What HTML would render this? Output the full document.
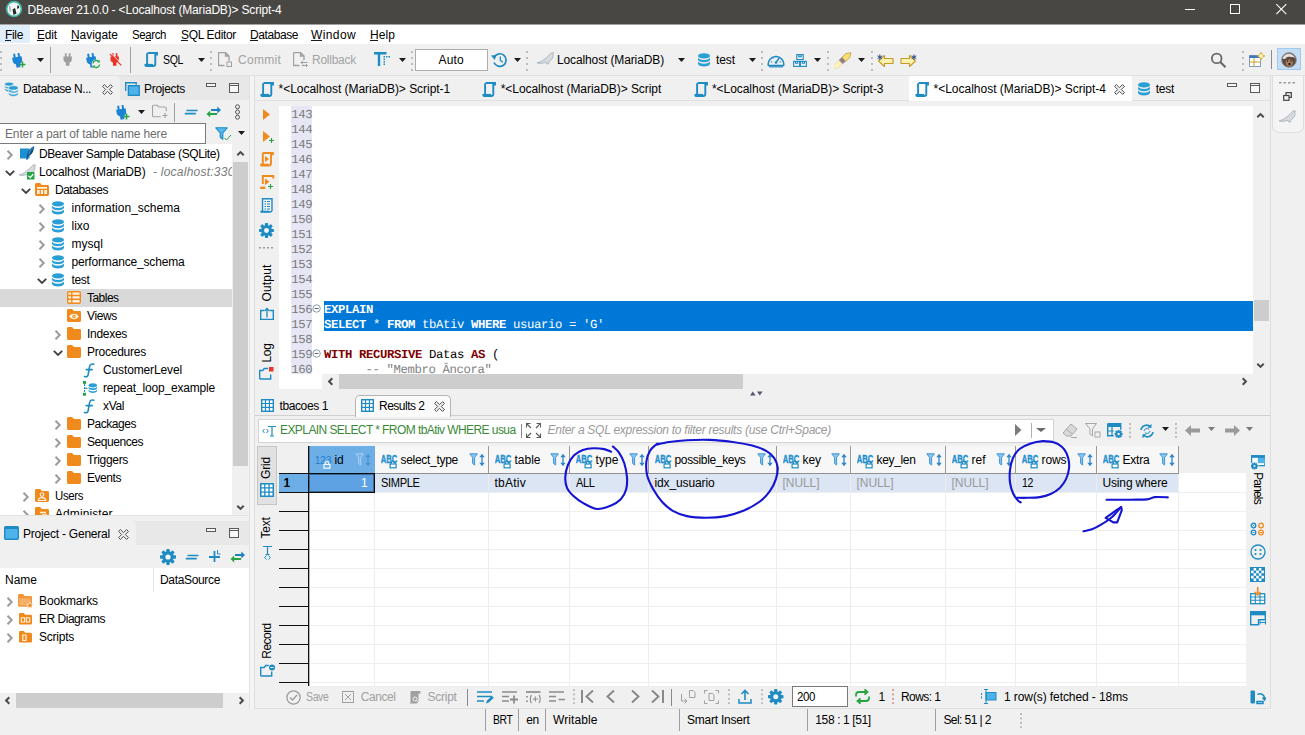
<!DOCTYPE html>
<html lang="en"><head><meta charset="utf-8"><title>DBeaver 21.0.0 - &lt;Localhost (MariaDB)&gt; Script-4</title>
<style>
*{box-sizing:border-box;margin:0;padding:0}
html,body{width:1305px;height:735px;overflow:hidden;background:#f0f0f0}
body{position:relative;font-family:"Liberation Sans",sans-serif;font-size:12px;color:#000}
div,span.t,svg{position:absolute}
span.t{white-space:pre;display:block}
span.m{font-family:"Liberation Mono",monospace;text-rendering:geometricPrecision}
span.b{font-weight:bold}
u{text-decoration:underline;text-underline-offset:1px}
</style></head>
<body>
<div style="left:0px;top:0px;width:1305px;height:24px;background:#494744;"></div>
<div style="left:0px;top:24px;width:1305px;height:1px;background:#a3a2a0;"></div>
<svg style="left:5px;top:0px" width="18" height="18" viewBox="0 0 18 18"><circle cx="9" cy="9" r="7.400" fill="#f4f6f6" stroke="#3fb5a3" stroke-width="1.700"/><path d="M4.500 5.500c1 1 1 5 .5 8M12.500 5c1.500.5 2 1.500 1.500 3l-2 1z" fill="#2a2a2a"/><path d="M7.500 9.500l2.500-1.500 1.500 5.500-3 1.500z" fill="#1f2a2a"/></svg>
<span class="t" style="left:27.5px;top:1.2px;line-height:18px;font-size:12px;color:#fff;letter-spacing:-0.173px;">DBeaver 21.0.0 - &lt;Localhost (MariaDB)&gt; Script-4</span>
<svg style="left:1160px;top:0" width="145" height="24" viewBox="0 0 145 24"><g stroke="#fff" stroke-width="1" fill="none" shape-rendering="crispEdges"><path d="M25 9.500h10"/><rect x="70.500" y="4.500" width="9" height="9"/></g><path d="M116.300 4.200l10 10M126.300 4.200l-10 10" stroke="#fff" stroke-width="1.100" fill="none"/></svg>
<div style="left:0px;top:25px;width:1305px;height:19px;background:#ffffff;"></div>
<div style="left:0px;top:25px;width:30px;height:18px;background:#e0eefb;"></div>
<span class="t" style="left:5px;top:25.5px;line-height:18px;font-size:12px;color:#000;letter-spacing:-0.336px;">File</span>
<span class="t" style="left:37px;top:25.5px;line-height:18px;font-size:12px;color:#000;letter-spacing:-0.172px;">Edit</span>
<span class="t" style="left:71px;top:25.5px;line-height:18px;font-size:12px;color:#000;letter-spacing:-0.047px;">Navigate</span>
<span class="t" style="left:132px;top:25.5px;line-height:18px;font-size:12px;color:#000;letter-spacing:-0.4px;transform:scaleX(0.9542);transform-origin:0 50%;">Search</span>
<span class="t" style="left:181px;top:25.5px;line-height:18px;font-size:12px;color:#000;letter-spacing:-0.325px;">SQL Editor</span>
<span class="t" style="left:250px;top:25.5px;line-height:18px;font-size:12px;color:#000;letter-spacing:-0.422px;">Database</span>
<span class="t" style="left:311px;top:25.5px;line-height:18px;font-size:12px;color:#000;letter-spacing:0.385px;">Window</span>
<span class="t" style="left:370px;top:25.5px;line-height:18px;font-size:12px;color:#000;letter-spacing:0.078px;">Help</span>
<div style="left:5px;top:40px;width:6px;height:1px;background:#1a1a1a;"></div>
<div style="left:37px;top:40px;width:7px;height:1px;background:#1a1a1a;"></div>
<div style="left:71px;top:40px;width:8px;height:1px;background:#1a1a1a;"></div>
<div style="left:145px;top:40px;width:6px;height:1px;background:#1a1a1a;"></div>
<div style="left:181px;top:40px;width:7px;height:1px;background:#1a1a1a;"></div>
<div style="left:250px;top:40px;width:8px;height:1px;background:#1a1a1a;"></div>
<div style="left:311px;top:40px;width:11px;height:1px;background:#1a1a1a;"></div>
<div style="left:370px;top:40px;width:8px;height:1px;background:#1a1a1a;"></div>
<div style="left:0px;top:44px;width:1305px;height:31px;background:#f0f0f0;"></div>
<div style="left:0px;top:75px;width:1305px;height:1px;background:#e2e2e2;"></div>
<svg style="left:0px;top:50.5px" width="2" height="20" viewBox="0 0 2 20"><rect x="0" y="0" width="2" height="2" fill="#bdbdbd"/><rect x="0" y="6" width="2" height="2" fill="#bdbdbd"/><rect x="0" y="12" width="2" height="2" fill="#bdbdbd"/><rect x="0" y="18" width="2" height="2" fill="#bdbdbd"/></svg>
<svg style="left:11px;top:52.5px" width="16" height="16" viewBox="0 0 16 16"><g transform="rotate(-9 6.500 8)"><path d="M3.300 .3h2v3.700h2.400V.3h2v3.700h1.600v3.200c0 2-1.200 3.300-2.800 3.800v3.500H4.500V11c-1.600-.5-2.800-1.800-2.800-3.800V4h1.600z" fill="#1b84d3"/></g><path d="M11.500 8.500v6M8.500 11.500h6" stroke="#27a344" stroke-width="1.500" fill="none"/></svg>
<svg style="left:37px;top:58px" width="7" height="4" viewBox="0 0 7 4"><path d="M0 0h7l-3.5 4z" fill="#1a1a1a"/></svg>
<div style="left:50px;top:47px;width:1px;height:26px;background:#a0a0a0;"></div>
<svg style="left:62px;top:53px" width="14" height="14" viewBox="0 0 16 16"><g transform="rotate(0 6.500 8)"><path d="M3.300 .3h2v3.700h2.400V.3h2v3.700h1.600v3.200c0 2-1.200 3.300-2.800 3.800v3.500H4.500V11c-1.600-.5-2.800-1.800-2.800-3.800V4h1.600z" fill="#9e9e9e"/></g></svg>
<svg style="left:85px;top:52.5px" width="16" height="16" viewBox="0 0 16 16"><g transform="rotate(-9 6.500 8)"><path d="M3.300 .3h2v3.700h2.400V.3h2v3.700h1.600v3.200c0 2-1.200 3.300-2.800 3.800v3.500H4.500V11c-1.600-.5-2.800-1.800-2.800-3.800V4h1.600z" fill="#1b84d3"/></g><circle cx="11.300" cy="11" r="4.600" fill="#f0f0f0"/><path d="M8 10.500a3.300 3.300 0 0 1 5.800-1.800M14.600 11.500a3.300 3.300 0 0 1-5.800 1.800" fill="none" stroke="#27a344" stroke-width="1.300"/><path d="M14.800 6.800v2.600h-2.600zM7.800 15.200v-2.600h2.600z" fill="#27a344"/></svg>
<svg style="left:109px;top:53px" width="14" height="14" viewBox="0 0 16 16"><g transform="rotate(0 6.500 8)"><path d="M3.300 .3h2v3.700h2.400V.3h2v3.700h1.600v3.200c0 2-1.200 3.300-2.800 3.800v3.500H4.500V11c-1.600-.5-2.800-1.800-2.800-3.800V4h1.600z" fill="#e8352a"/></g><path d="M1 1l13 13" stroke="#e8352a" stroke-width="1.300"/><path d="M2 0l13 13" stroke="#f0f0f0" stroke-width="1"/></svg>
<div style="left:130px;top:47px;width:1px;height:26px;background:#a0a0a0;"></div>
<svg style="left:144px;top:52px" width="14" height="15" viewBox="0 0 14 15"><path d="M3.500 1h9.500v2.500M11.300 1v11c0 1.200-.8 2-2 2H1.200c1.100 0 1.900-.8 1.900-2V1.200" fill="none" stroke="#1e8bc3" stroke-width="1.900"/><path d="M.5 13h8.500" stroke="#1e8bc3" stroke-width="2.200" fill="none"/></svg>
<span class="t" style="left:163px;top:50.5px;line-height:18px;font-size:12px;color:#000;letter-spacing:-0.4px;transform:scaleX(0.8766);transform-origin:0 50%;">SQL</span>
<svg style="left:198px;top:58px" width="7" height="4" viewBox="0 0 7 4"><path d="M0 0h7l-3.5 4z" fill="#1a1a1a"/></svg>
<svg style="left:210px;top:50.5px" width="2" height="20" viewBox="0 0 2 20"><rect x="0" y="0" width="2" height="2" fill="#bdbdbd"/><rect x="0" y="6" width="2" height="2" fill="#bdbdbd"/><rect x="0" y="12" width="2" height="2" fill="#bdbdbd"/><rect x="0" y="18" width="2" height="2" fill="#bdbdbd"/></svg>
<svg style="left:218px;top:52px" width="16" height="16" viewBox="0 0 16 16"><path d="M.5 .5h7l3.500 3.500v4M.5 .5v13h6M7.500 .5v3.500h3.500" fill="none" stroke="#a0a0a0" stroke-width="1.300"/><rect x="9" y="10" width="4.500" height="4.500" fill="none" stroke="#a0a0a0" stroke-width="1"/><path d="M11 7.500v2" stroke="#a0a0a0" stroke-width="1"/></svg>
<span class="t" style="left:238px;top:50.5px;line-height:18px;font-size:12px;color:#a3a3a3;letter-spacing:0.276px;">Commit</span>
<svg style="left:293px;top:52px" width="16" height="16" viewBox="0 0 16 16"><path d="M.5 .5h7l3.500 3.500v4M.5 .5v13h6M7.500 .5v3.500h3.500" fill="none" stroke="#a0a0a0" stroke-width="1.300"/><path d="M8 10.500h6.500M8 10.500l2-2M8 10.500l2 2M14.500 13.500H9M14.500 13.500l-1.500-1.500M14.500 13.500l-1.500 1.500" fill="none" stroke="#a0a0a0" stroke-width="1"/></svg>
<span class="t" style="left:312px;top:50.5px;line-height:18px;font-size:12px;color:#a3a3a3;letter-spacing:-0.254px;">Rollback</span>
<svg style="left:374px;top:52px" width="16" height="15" viewBox="0 0 16 15"><path d="M0 1.200h12.500M5 1.200V14" stroke="#1e8bc3" stroke-width="2.400" fill="none"/><rect x="9.5" y="4" width="1.500" height="1.500" fill="#1e8bc3"/><rect x="12.0" y="4" width="1.500" height="1.500" fill="#1e8bc3"/><rect x="14.5" y="4" width="1.500" height="1.500" fill="#1e8bc3"/><rect x="9.500" y="6.5" width="1.500" height="1.500" fill="#1e8bc3"/><rect x="9.500" y="9.0" width="1.500" height="1.500" fill="#1e8bc3"/><rect x="9.500" y="11.5" width="1.500" height="1.500" fill="#1e8bc3"/></svg>
<svg style="left:399px;top:58px" width="7" height="4" viewBox="0 0 7 4"><path d="M0 0h7l-3.5 4z" fill="#1a1a1a"/></svg>
<svg style="left:411px;top:50.5px" width="2" height="20" viewBox="0 0 2 20"><rect x="0" y="0" width="2" height="2" fill="#bdbdbd"/><rect x="0" y="6" width="2" height="2" fill="#bdbdbd"/><rect x="0" y="12" width="2" height="2" fill="#bdbdbd"/><rect x="0" y="18" width="2" height="2" fill="#bdbdbd"/></svg>
<div style="left:415px;top:49px;width:73px;height:22px;background:#fff;border:1px solid #adadad;"></div>
<span class="t" style="left:438.5px;top:50.5px;line-height:18px;font-size:12px;color:#000;letter-spacing:0.203px;">Auto</span>
<svg style="left:491px;top:52px" width="17" height="16" viewBox="0 0 17 16"><path d="M3.300 5a6.300 6.300 0 1 1-.3 5.500" fill="none" stroke="#1e8bc3" stroke-width="1.700"/><path d="M0 3.500l5.500-.5-1.800 5z" fill="#1e8bc3"/><path d="M9.300 4.500V8.300l2.500 2" fill="none" stroke="#1e8bc3" stroke-width="1.300"/></svg>
<svg style="left:514px;top:58px" width="7" height="4" viewBox="0 0 7 4"><path d="M0 0h7l-3.5 4z" fill="#1a1a1a"/></svg>
<svg style="left:526px;top:50.5px" width="2" height="20" viewBox="0 0 2 20"><rect x="0" y="0" width="2" height="2" fill="#bdbdbd"/><rect x="0" y="6" width="2" height="2" fill="#bdbdbd"/><rect x="0" y="12" width="2" height="2" fill="#bdbdbd"/><rect x="0" y="18" width="2" height="2" fill="#bdbdbd"/></svg>
<svg style="left:537px;top:52px" width="17" height="16" viewBox="0 0 17 16"><path d="M.5 10.500C3 10.500 5 9 7 7.500 9 6 11 4.500 12.500 2.500 13.300 1.300 14.800 .6 16.300 .8 15.800 1.600 15.900 2.600 16 3.600 16.100 5.400 15 7.600 13.200 9 12.400 9.700 11.600 10.600 11.400 12L9.600 12C9.900 10.900 9.600 10.300 8.800 10.400 6.500 10.800 3.500 11.800 .5 11.300Z" fill="#d5dade" stroke="#a3adb6" stroke-width=".8" stroke-linejoin="round"/></svg>
<span class="t" style="left:557px;top:50.5px;line-height:18px;font-size:12px;color:#000;letter-spacing:-0.125px;">Localhost (MariaDB)</span>
<svg style="left:678px;top:58px" width="7" height="4" viewBox="0 0 7 4"><path d="M0 0h7l-3.5 4z" fill="#1a1a1a"/></svg>
<svg style="left:697px;top:53px" width="14" height="14" viewBox="0 0 14 14"><g fill="#2a9fd6"><ellipse cx="7" cy="2.900" rx="6" ry="2.700"/><path d="M1 4.800c1.200 1.700 3.400 2.200 6 2.200s4.800-.5 6-2.200v2.300c-1 1.600-3.400 2.200-6 2.200s-5-.6-6-2.200z"/><path d="M1 8.600c1.200 1.700 3.400 2.200 6 2.200s4.800-.5 6-2.200v2.300c-1 1.800-3.400 2.500-6 2.500s-5-.7-6-2.500z"/></g></svg>
<span class="t" style="left:716px;top:50.5px;line-height:18px;font-size:12px;color:#000;letter-spacing:-0.086px;">test</span>
<svg style="left:749px;top:58px" width="7" height="4" viewBox="0 0 7 4"><path d="M0 0h7l-3.5 4z" fill="#1a1a1a"/></svg>
<svg style="left:761px;top:50.5px" width="2" height="20" viewBox="0 0 2 20"><rect x="0" y="0" width="2" height="2" fill="#bdbdbd"/><rect x="0" y="6" width="2" height="2" fill="#bdbdbd"/><rect x="0" y="12" width="2" height="2" fill="#bdbdbd"/><rect x="0" y="18" width="2" height="2" fill="#bdbdbd"/></svg>
<svg style="left:767px;top:52.5px" width="18" height="15" viewBox="0 0 18 15"><path d="M1.300 12.500A7.800 7.800 0 1 1 16.700 12.500z" fill="none" stroke="#1e8bc3" stroke-width="1.500" stroke-linejoin="round"/><path d="M2 13.800h14" stroke="#1e8bc3" stroke-width="1.200"/><path d="M9 9.500l3.200-4.500" stroke="#1e8bc3" stroke-width="1.500"/><circle cx="9" cy="9.500" r="1.300" fill="#1e8bc3"/><path d="M3.800 8.800h1.500M12.700 8.800h1.500M5.300 4.800l1 1M9 2.800v1.500" stroke="#1e8bc3" stroke-width="1"/></svg>
<svg style="left:792.7px;top:53.6px" width="14" height="13" viewBox="0 0 14 13"><g fill="none" stroke="#1e8bc3" stroke-width="1.100"><rect x="3.800" y=".6" width="6.400" height="5"/><rect x=".6" y="7.400" width="6" height="5"/><rect x="7.400" y="7.400" width="6" height="5"/><path d="M5.800 .6v2.200h2.400V.6M2.500 7.400v1.800h2.200v-1.800M9.300 7.400v1.800h2.200v-1.800"/></g></svg>
<svg style="left:814px;top:58px" width="7" height="4" viewBox="0 0 7 4"><path d="M0 0h7l-3.5 4z" fill="#1a1a1a"/></svg>
<svg style="left:827px;top:50.5px" width="2" height="20" viewBox="0 0 2 20"><rect x="0" y="0" width="2" height="2" fill="#bdbdbd"/><rect x="0" y="6" width="2" height="2" fill="#bdbdbd"/><rect x="0" y="12" width="2" height="2" fill="#bdbdbd"/><rect x="0" y="18" width="2" height="2" fill="#bdbdbd"/></svg>
<svg style="left:833.5px;top:51px" width="18" height="18" viewBox="0 0 18 18"><g transform="rotate(-42 9 9)"><path d="M-2 6.500h8v5h-8c-1.500-.8-1.500-4.200 0-5z" fill="#fbf1bd" stroke="#ead58a" stroke-width=".6"/><rect x="6" y="6.200" width="4.200" height="5.600" fill="#8f7f88"/><path d="M10.200 6.200h5.300l4.300 2.800-4.300 2.800h-5.300z" fill="#f7dd7a" stroke="#c9a43a" stroke-width=".8" stroke-linejoin="round"/></g></svg>
<svg style="left:858px;top:58px" width="7" height="4" viewBox="0 0 7 4"><path d="M0 0h7l-3.5 4z" fill="#1a1a1a"/></svg>
<svg style="left:871px;top:50.5px" width="2" height="20" viewBox="0 0 2 20"><rect x="0" y="0" width="2" height="2" fill="#bdbdbd"/><rect x="0" y="6" width="2" height="2" fill="#bdbdbd"/><rect x="0" y="12" width="2" height="2" fill="#bdbdbd"/><rect x="0" y="18" width="2" height="2" fill="#bdbdbd"/></svg>
<svg style="left:876.5px;top:52.5px" width="17" height="16" viewBox="0 0 17 16"><g transform="translate(.5 0)"><path d="M7 2.500L1 8l6 5.500v-3h8.500v-5H7z" fill="#fdf1b0" stroke="#c49a2a" stroke-width="1.100" stroke-linejoin="round"/></g><path d="M2.800 1.500v5.400M.5 2.800l4.600 2.800M.5 5.600l4.600-2.800" stroke="#2a4a8a" stroke-width="1"/></svg>
<svg style="left:899.8px;top:52.5px" width="17" height="16" viewBox="0 0 17 16"><g transform="translate(16.500 0) scale(-1 1)"><path d="M7 2.500L1 8l6 5.500v-3h8.500v-5H7z" fill="#fdf1b0" stroke="#c49a2a" stroke-width="1.100" stroke-linejoin="round"/></g><g transform="translate(11.200 0)"><path d="M2.800 1.500v5.400M.5 2.800l4.600 2.800M.5 5.600l4.600-2.800" stroke="#2a4a8a" stroke-width="1"/></g></svg>
<svg style="left:1210px;top:51px" width="18" height="18" viewBox="0 0 18 18"><circle cx="6.700" cy="7.400" r="4.800" fill="none" stroke="#6a6a6a" stroke-width="1.800"/><path d="M10.300 11l5.200 5.200" stroke="#6a6a6a" stroke-width="2.200"/></svg>
<svg style="left:1242px;top:50.5px" width="2" height="20" viewBox="0 0 2 20"><rect x="0" y="0" width="2" height="2" fill="#bdbdbd"/><rect x="0" y="6" width="2" height="2" fill="#bdbdbd"/><rect x="0" y="12" width="2" height="2" fill="#bdbdbd"/><rect x="0" y="18" width="2" height="2" fill="#bdbdbd"/></svg>
<svg style="left:1249px;top:52px" width="16" height="16" viewBox="0 0 16 16"><rect x=".5" y="3.500" width="11" height="11" fill="#fff" stroke="#7f9fc6" stroke-width="1"/><path d="M.5 3.500h11v2.500H.5z" fill="#3b77bc"/><path d="M.5 10h11M5 6v8.500" stroke="#c9a227" stroke-width="1"/><path d="M12 .3l1.300 2.500 2.500 1.200-2.500 1.300L12 7.800l-1.300-2.500L8.200 4l2.500-1.200z" fill="#fff6c0" stroke="#d4a017" stroke-width=".8"/></svg>
<div style="left:1271px;top:50px;width:1px;height:19px;background:#8a8a8a;"></div>
<div style="left:1277px;top:48px;width:24px;height:22px;background:#c5def5;border:1px solid #9ccaf0;"></div>
<svg style="left:1281px;top:52px" width="16" height="16" viewBox="0 0 16 16"><circle cx="8" cy="8" r="7.300" fill="#5c4a40" stroke="#8a8f94" stroke-width="1"/><path d="M1.500 6.500c1-3.500 4-5 7-4.800 2.500.2 5 2 5.800 5-1-1.200-2.300-1.800-3.800-1.500-2.500-.8-5-.5-6 1.500-1 .3-2 .3-3-.2z" fill="#e8e3dc"/><path d="M5 8.500c1.500-1.500 5-1.500 6.500.3 1 1.700.3 4.200-1.300 5.500-1.700.8-3.700.3-4.700-1C4.300 11.500 4.300 9.500 5 8.500z" fill="#a67c5b"/><circle cx="6.500" cy="9" r=".7" fill="#1a1a1a"/><circle cx="10" cy="9" r=".7" fill="#1a1a1a"/><path d="M7.500 11h2v2.200h-2z" fill="#2a1a10"/></svg>
<div style="left:0px;top:76px;width:249px;height:25px;background:#e8e8e8;"></div>
<div style="left:0px;top:76px;width:120px;height:25px;background:#f0f0f0;border-top-right-radius:5px;"></div>
<div style="left:0px;top:100px;width:249px;height:417px;background:#f0f0f0;"></div>
<svg style="left:3.5px;top:81.5px" width="15" height="15" viewBox="0 0 15 15"><g transform="translate(0 0) scale(0.72)" fill="#2a9fd6" stroke="#f0f0f0" stroke-width=".7"><ellipse cx="7" cy="2.900" rx="6" ry="2.700"/><path d="M1 4.800c1.200 1.700 3.400 2.200 6 2.200s4.800-.5 6-2.200v2.300c-1 1.600-3.400 2.200-6 2.200s-5-.6-6-2.200z"/><path d="M1 8.600c1.200 1.700 3.400 2.200 6 2.200s4.800-.5 6-2.200v2.300c-1 1.800-3.400 2.500-6 2.500s-5-.7-6-2.500z"/></g><g transform="translate(3.8 3.6) scale(0.8)" fill="#2a9fd6" stroke="#f0f0f0" stroke-width=".7"><ellipse cx="7" cy="2.900" rx="6" ry="2.700"/><path d="M1 4.800c1.200 1.700 3.400 2.200 6 2.200s4.800-.5 6-2.200v2.300c-1 1.600-3.400 2.200-6 2.200s-5-.6-6-2.200z"/><path d="M1 8.600c1.200 1.700 3.400 2.200 6 2.200s4.800-.5 6-2.200v2.300c-1 1.800-3.400 2.500-6 2.500s-5-.7-6-2.500z"/></g></svg>
<span class="t" style="left:23px;top:79.5px;line-height:18px;font-size:12px;color:#000;letter-spacing:-0.413px;">Database N...</span>
<svg style="left:102px;top:84px" width="11" height="11" viewBox="0 0 11 11"><path d="M.6 2.400L2.400 .6 5.500 3.700 8.600 .6 10.400 2.400 7.300 5.500 10.400 8.600 8.600 10.400 5.500 7.300 2.400 10.400 .6 8.600 3.700 5.500z" fill="#f4f4f4" stroke="#4a4a4a" stroke-width="1"/></svg>
<svg style="left:125px;top:82px" width="15" height="14" viewBox="0 0 15 14"><path d="M.7 9V.7h10.500v2" fill="none" stroke="#1e8bc3" stroke-width="1.400"/><rect x="3.400" y="3.700" width="10.800" height="9.600" fill="#4db3ea" stroke="#1e8bc3" stroke-width="1.400"/></svg>
<span class="t" style="left:144px;top:79.5px;line-height:18px;font-size:12px;color:#000;letter-spacing:-0.295px;">Projects</span>
<svg style="left:206px;top:83px" width="34" height="11" viewBox="0 0 34 11"><g fill="#f8f8f8" stroke="#5a5a5a" stroke-width="1" shape-rendering="crispEdges"><rect x=".5" y=".5" width="9" height="3"/><rect x="23.500" y=".5" width="9" height="9"/><path d="M23.500 2.500h9"/></g></svg>
<svg style="left:115px;top:104.5px" width="16" height="16" viewBox="0 0 16 16"><g transform="rotate(-9 6.500 8)"><path d="M3.300 .3h2v3.700h2.400V.3h2v3.700h1.600v3.200c0 2-1.200 3.300-2.800 3.800v3.500H4.500V11c-1.600-.5-2.800-1.800-2.800-3.800V4h1.600z" fill="#1b84d3"/></g><path d="M11.500 8.500v6M8.500 11.500h6" stroke="#27a344" stroke-width="1.500" fill="none"/></svg>
<svg style="left:138px;top:110px" width="7" height="4" viewBox="0 0 7 4"><path d="M0 0h7l-3.5 4z" fill="#1a1a1a"/></svg>
<svg style="left:152px;top:104px" width="17" height="15" viewBox="0 0 17 15"><path d="M.5 2.500c0-.8.400-1.200 1.200-1.200h3.800l1.500 1.700h6c.8 0 1.200.4 1.200 1.200v3M.5 2.500v9c0 .8.400 1.200 1.200 1.200h7" fill="none" stroke="#a3a3a3" stroke-width="1.100"/><path d="M13 9v5M10.500 11.500h5" stroke="#a3a3a3" stroke-width="1.200"/></svg>
<div style="left:174px;top:103px;width:1px;height:19px;background:#a0a0a0;"></div>
<svg style="left:184px;top:108.5px" width="15" height="7" viewBox="0 0 15 7"><path d="M2.500 1.500h11M.8 4.700h11" stroke="#1e8bc3" stroke-width="1.700"/></svg>
<svg style="left:206.3px;top:105.5px" width="16" height="12" viewBox="0 0 16 12"><path d="M5 4h8.500" stroke="#1e7fc1" stroke-width="2" fill="none"/><path d="M11.300 .6L15 4l-3.700 3.400z" fill="#1e7fc1"/><path d="M2.500 8h8.500" stroke="#27a344" stroke-width="2" fill="none"/><path d="M4.200 4.600L.5 8l3.700 3.400z" fill="#27a344"/></svg>
<svg style="left:234px;top:104px" width="7" height="16" viewBox="0 0 7 16"><g fill="none" stroke="#555" stroke-width="1"><circle cx="3.500" cy="2.800" r="2"/><circle cx="3.500" cy="8" r="2"/><circle cx="3.500" cy="13.200" r="2"/></g></svg>
<div style="left:0px;top:123px;width:206px;height:21px;background:#fff;border:1px solid #7a7a7a;border-left:none;"></div>
<span class="t" style="left:5px;top:124.5px;line-height:18px;font-size:12px;color:#6d6d6d;letter-spacing:-0.133px;">Enter a part of table name here</span>
<svg style="left:215px;top:126px" width="18" height="16" viewBox="0 0 18 16"><path d="M.8 1.800h11.400L7.800 7v6.300L5.200 11.300V7z" fill="#55b8ee" stroke="#1e8bc3" stroke-width="1.100" stroke-linejoin="round"/><path d="M9.500 12l2 2 4.500-5" fill="none" stroke="#27a344" stroke-width="1"/></svg>
<svg style="left:238px;top:131px" width="7" height="4" viewBox="0 0 7 4"><path d="M0 0h7l-3.5 4z" fill="#1a1a1a"/></svg>
<div style="left:0px;top:144px;width:232px;height:372px;background:#fff;"></div>
<div style="left:0px;top:289px;width:232px;height:18px;background:#d9d9d9;"></div>
<svg style="left:6.1px;top:150px" width="8" height="10" viewBox="0 0 8 10"><path d="M1.500 .8l4.200 4.200-4.200 4.200" fill="none" stroke="#9c9c9c" stroke-width="2"/></svg>
<svg style="left:19px;top:146px" width="16" height="15" viewBox="0 0 16 15"><path d="M1 2.500h9.500v10H1z" fill="#1b8fd1"/><path d="M15.300.3c-2.600.4-5.200 3-6.700 7.200-.7 2-1.100 4.300-1.300 6.500l1 .1c.3-1.700.8-3.100 1.400-4.100 2.700-.6 5-4 5.600-9.700z" fill="#0c4f86"/><path d="M14.300 1.400c-1.900 1.400-3.500 3.700-4.500 7" stroke="#6fc3f2" stroke-width=".7" fill="none"/></svg>
<span class="t" style="left:39px;top:144.5px;line-height:18px;font-size:12px;color:#000;letter-spacing:-0.404px;">DBeaver Sample Database (SQLite)</span>
<svg style="left:4.5px;top:169px" width="10" height="8" viewBox="0 0 10 8"><path d="M.8 1.800l4.200 4.200 4.200-4.200" fill="none" stroke="#404040" stroke-width="1.800"/></svg>
<svg style="left:19px;top:164px" width="17" height="16" viewBox="0 0 17 16"><path d="M.5 10.500C3 10.500 5 9 7 7.500 9 6 11 4.500 12.500 2.500 13.300 1.300 14.800 .6 16.300 .8 15.800 1.600 15.900 2.600 16 3.600 16.100 5.400 15 7.600 13.200 9 12.400 9.700 11.600 10.600 11.400 12L9.600 12C9.900 10.900 9.600 10.300 8.800 10.400 6.500 10.800 3.500 11.800 .5 11.300Z" fill="#d5dade" stroke="#a3adb6" stroke-width=".8" stroke-linejoin="round"/><rect x="8" y="8" width="7.500" height="7.500" fill="#27a344"/><path d="M9.500 11.800l1.800 1.800 3-3.600" stroke="#fff" stroke-width="1.200" fill="none"/></svg>
<span class="t" style="left:39px;top:162.5px;line-height:18px;font-size:12px;color:#000;letter-spacing:-0.151px;">Localhost (MariaDB)</span>
<span class="t" style="left:153px;top:162.5px;line-height:18px;font-size:12px;color:#7a7a7a;letter-spacing:0.235px;font-style:italic;">- localhost:3306</span>
<svg style="left:20.8px;top:187px" width="10" height="8" viewBox="0 0 10 8"><path d="M.8 1.800l4.200 4.200 4.200-4.200" fill="none" stroke="#404040" stroke-width="1.800"/></svg>
<svg style="left:35px;top:183px" width="14" height="13" viewBox="0 0 14 13"><path d="M0 1.500C0 .7.600 0 1.400 0h3.800l1.600 2h5.800c.8 0 1.400.6 1.400 1.400v8.200c0 .8-.6 1.400-1.400 1.400H1.400C.6 13 0 12.400 0 11.600z" fill="#f08a1c"/><path d="M2 4h10v7H2z" fill="#fff3e0"/><path d="M2 6.300h10M5.300 6.300V11M8.700 6.300V11" stroke="#f08a1c" stroke-width="1.200" fill="none"/></svg>
<span class="t" style="left:55px;top:180.5px;line-height:18px;font-size:12px;color:#000;letter-spacing:-0.486px;">Databases</span>
<svg style="left:38.4px;top:204px" width="8" height="10" viewBox="0 0 8 10"><path d="M1.500 .8l4.200 4.200-4.200 4.200" fill="none" stroke="#9c9c9c" stroke-width="2"/></svg>
<svg style="left:51px;top:201px" width="14" height="14" viewBox="0 0 14 14"><g fill="#2a9fd6"><ellipse cx="7" cy="2.900" rx="6" ry="2.700"/><path d="M1 4.800c1.200 1.700 3.400 2.200 6 2.200s4.800-.5 6-2.200v2.300c-1 1.600-3.400 2.200-6 2.200s-5-.6-6-2.200z"/><path d="M1 8.600c1.200 1.700 3.400 2.200 6 2.200s4.800-.5 6-2.200v2.300c-1 1.800-3.400 2.500-6 2.500s-5-.7-6-2.500z"/></g></svg>
<span class="t" style="left:71.5px;top:198.5px;line-height:18px;font-size:12px;color:#000;letter-spacing:0.024px;">information_schema</span>
<svg style="left:38.4px;top:222px" width="8" height="10" viewBox="0 0 8 10"><path d="M1.500 .8l4.200 4.200-4.200 4.200" fill="none" stroke="#9c9c9c" stroke-width="2"/></svg>
<svg style="left:51px;top:219px" width="14" height="14" viewBox="0 0 14 14"><g fill="#2a9fd6"><ellipse cx="7" cy="2.900" rx="6" ry="2.700"/><path d="M1 4.800c1.200 1.700 3.400 2.200 6 2.200s4.800-.5 6-2.200v2.300c-1 1.600-3.400 2.200-6 2.200s-5-.6-6-2.200z"/><path d="M1 8.600c1.200 1.700 3.400 2.200 6 2.200s4.800-.5 6-2.200v2.300c-1 1.800-3.400 2.500-6 2.500s-5-.7-6-2.500z"/></g></svg>
<span class="t" style="left:71.5px;top:216.5px;line-height:18px;font-size:12px;color:#000;">lixo</span>
<svg style="left:38.4px;top:240px" width="8" height="10" viewBox="0 0 8 10"><path d="M1.500 .8l4.200 4.200-4.200 4.200" fill="none" stroke="#9c9c9c" stroke-width="2"/></svg>
<svg style="left:51px;top:237px" width="14" height="14" viewBox="0 0 14 14"><g fill="#2a9fd6"><ellipse cx="7" cy="2.900" rx="6" ry="2.700"/><path d="M1 4.800c1.200 1.700 3.400 2.200 6 2.200s4.800-.5 6-2.200v2.300c-1 1.600-3.400 2.200-6 2.200s-5-.6-6-2.200z"/><path d="M1 8.600c1.200 1.700 3.400 2.200 6 2.200s4.800-.5 6-2.200v2.300c-1 1.800-3.400 2.500-6 2.500s-5-.7-6-2.500z"/></g></svg>
<span class="t" style="left:71.5px;top:234.5px;line-height:18px;font-size:12px;color:#000;letter-spacing:0.031px;">mysql</span>
<svg style="left:38.4px;top:258px" width="8" height="10" viewBox="0 0 8 10"><path d="M1.500 .8l4.200 4.200-4.200 4.200" fill="none" stroke="#9c9c9c" stroke-width="2"/></svg>
<svg style="left:51px;top:255px" width="14" height="14" viewBox="0 0 14 14"><g fill="#2a9fd6"><ellipse cx="7" cy="2.900" rx="6" ry="2.700"/><path d="M1 4.800c1.200 1.700 3.400 2.200 6 2.200s4.800-.5 6-2.200v2.300c-1 1.600-3.400 2.200-6 2.200s-5-.6-6-2.200z"/><path d="M1 8.600c1.200 1.700 3.400 2.200 6 2.200s4.800-.5 6-2.200v2.300c-1 1.800-3.400 2.500-6 2.500s-5-.7-6-2.500z"/></g></svg>
<span class="t" style="left:71.5px;top:252.5px;line-height:18px;font-size:12px;color:#000;letter-spacing:-0.170px;">performance_schema</span>
<svg style="left:36.5px;top:277px" width="10" height="8" viewBox="0 0 10 8"><path d="M.8 1.800l4.200 4.200 4.200-4.200" fill="none" stroke="#404040" stroke-width="1.800"/></svg>
<svg style="left:51px;top:273px" width="14" height="14" viewBox="0 0 14 14"><g fill="#2a9fd6"><ellipse cx="7" cy="2.900" rx="6" ry="2.700"/><path d="M1 4.800c1.200 1.700 3.400 2.200 6 2.200s4.800-.5 6-2.200v2.300c-1 1.600-3.400 2.200-6 2.200s-5-.6-6-2.200z"/><path d="M1 8.600c1.200 1.700 3.400 2.200 6 2.200s4.800-.5 6-2.200v2.300c-1 1.800-3.400 2.500-6 2.500s-5-.7-6-2.500z"/></g></svg>
<span class="t" style="left:71.5px;top:270.5px;line-height:18px;font-size:12px;color:#000;letter-spacing:-0.336px;">test</span>
<svg style="left:67px;top:291px" width="14" height="13" viewBox="0 0 14 13"><rect x=".7" y=".7" width="12.600" height="11.600" rx="1.300" fill="#fff3e0" stroke="#f08a1c" stroke-width="1.400"/><path d="M1 4.500h12M1 8.300h12M4.800 1v11.500" stroke="#f08a1c" stroke-width="1.400" fill="none"/></svg>
<span class="t" style="left:87px;top:288.5px;line-height:18px;font-size:12px;color:#000;letter-spacing:-0.531px;">Tables</span>
<svg style="left:67px;top:309px" width="14" height="13" viewBox="0 0 14 13"><path d="M0 1.500C0 .7.600 0 1.400 0h3.800l1.600 2h5.800c.8 0 1.400.6 1.400 1.400v8.200c0 .8-.6 1.400-1.400 1.400H1.400C.6 13 0 12.400 0 11.600z" fill="#f08a1c"/><path d="M2.200 7.500c1.300-2 3-2.700 4.800-2.700s3.500.7 4.800 2.700c-1.300 2-3 2.700-4.800 2.700s-3.500-.7-4.800-2.700z" fill="#fff3e0"/><circle cx="7" cy="7.500" r="1.700" fill="#f08a1c"/><circle cx="7" cy="7.500" r=".7" fill="#fff3e0"/></svg>
<span class="t" style="left:87px;top:306.5px;line-height:18px;font-size:12px;color:#000;letter-spacing:-0.359px;">Views</span>
<svg style="left:54px;top:330px" width="8" height="10" viewBox="0 0 8 10"><path d="M1.500 .8l4.200 4.200-4.200 4.200" fill="none" stroke="#9c9c9c" stroke-width="2"/></svg>
<svg style="left:67px;top:327px" width="14" height="13" viewBox="0 0 14 13"><path d="M0 1.500C0 .7.600 0 1.400 0h3.800l1.600 2h5.800c.8 0 1.400.6 1.400 1.400v8.200c0 .8-.6 1.400-1.400 1.400H1.400C.6 13 0 12.400 0 11.600z" fill="#f08a1c"/></svg>
<span class="t" style="left:87px;top:324.5px;line-height:18px;font-size:12px;color:#000;letter-spacing:-0.290px;">Indexes</span>
<svg style="left:52.5px;top:349px" width="10" height="8" viewBox="0 0 10 8"><path d="M.8 1.800l4.200 4.200 4.200-4.200" fill="none" stroke="#404040" stroke-width="1.800"/></svg>
<svg style="left:67px;top:345px" width="14" height="13" viewBox="0 0 14 13"><path d="M0 1.500C0 .7.600 0 1.400 0h3.800l1.600 2h5.800c.8 0 1.400.6 1.400 1.400v8.200c0 .8-.6 1.400-1.400 1.400H1.400C.6 13 0 12.400 0 11.600z" fill="#f08a1c"/></svg>
<span class="t" style="left:87px;top:342.5px;line-height:18px;font-size:12px;color:#000;letter-spacing:-0.237px;">Procedures</span>
<svg style="left:83.4px;top:362.5px" width="12" height="15" viewBox="0 0 12 15"><path d="M10.800 1.300c-2.600-.9-3.900.4-4.300 2.600L5.200 11.500c-.4 2-1.600 2.800-3.700 2M3.200 6.600h6" fill="none" stroke="#1e8bc3" stroke-width="1.600" stroke-linecap="round"/></svg>
<span class="t" style="left:103px;top:360.5px;line-height:18px;font-size:12px;color:#000;letter-spacing:-0.131px;">CustomerLevel</span>
<svg style="left:83px;top:381.3px" width="15" height="15" viewBox="0 0 15 15"><path d="M1.500 3v9" stroke="#1e8bc3" stroke-width="1.100" stroke-dasharray="2 1" fill="none"/><path d="M1.500 7.300h3" stroke="#1e8bc3" stroke-width="1.100" fill="none"/><rect x="0" y="0" width="3" height="2.900" fill="#27a344"/><rect x="0" y="11.800" width="3" height="2.900" fill="#27a344"/><g fill="#2a9fd6"><ellipse cx="9.800" cy="4.300" rx="4.200" ry="2.100"/><path d="M5.600 5.800c.9 1.200 2.400 1.500 4.200 1.500s3.300-.3 4.200-1.500v1.700c-.8 1.200-2.400 1.600-4.200 1.600s-3.400-.4-4.200-1.600z"/><path d="M5.600 8.700c.9 1.200 2.400 1.500 4.200 1.500s3.300-.3 4.200-1.500v1.600c-.8 1.300-2.400 1.700-4.200 1.700s-3.400-.4-4.200-1.700z"/></g></svg>
<span class="t" style="left:103px;top:378.5px;line-height:18px;font-size:12px;color:#000;letter-spacing:-0.180px;">repeat_loop_example</span>
<svg style="left:83.4px;top:398.5px" width="12" height="15" viewBox="0 0 12 15"><path d="M10.800 1.300c-2.600-.9-3.900.4-4.300 2.600L5.200 11.500c-.4 2-1.600 2.800-3.700 2M3.200 6.600h6" fill="none" stroke="#1e8bc3" stroke-width="1.600" stroke-linecap="round"/></svg>
<span class="t" style="left:103px;top:396.5px;line-height:18px;font-size:12px;color:#000;letter-spacing:-0.363px;">xVal</span>
<svg style="left:54px;top:420px" width="8" height="10" viewBox="0 0 8 10"><path d="M1.500 .8l4.200 4.200-4.200 4.200" fill="none" stroke="#9c9c9c" stroke-width="2"/></svg>
<svg style="left:67px;top:417px" width="14" height="13" viewBox="0 0 14 13"><path d="M0 1.500C0 .7.600 0 1.400 0h3.800l1.600 2h5.800c.8 0 1.400.6 1.400 1.400v8.200c0 .8-.6 1.400-1.400 1.400H1.400C.6 13 0 12.400 0 11.600z" fill="#f08a1c"/></svg>
<span class="t" style="left:87px;top:414.5px;line-height:18px;font-size:12px;color:#000;letter-spacing:-0.463px;">Packages</span>
<svg style="left:54px;top:438px" width="8" height="10" viewBox="0 0 8 10"><path d="M1.500 .8l4.200 4.200-4.200 4.200" fill="none" stroke="#9c9c9c" stroke-width="2"/></svg>
<svg style="left:67px;top:435px" width="14" height="13" viewBox="0 0 14 13"><path d="M0 1.500C0 .7.600 0 1.400 0h3.800l1.600 2h5.800c.8 0 1.400.6 1.400 1.400v8.200c0 .8-.6 1.400-1.400 1.400H1.400C.6 13 0 12.400 0 11.600z" fill="#f08a1c"/></svg>
<span class="t" style="left:87px;top:432.5px;line-height:18px;font-size:12px;color:#000;letter-spacing:-0.450px;">Sequences</span>
<svg style="left:54px;top:456px" width="8" height="10" viewBox="0 0 8 10"><path d="M1.500 .8l4.200 4.200-4.200 4.200" fill="none" stroke="#9c9c9c" stroke-width="2"/></svg>
<svg style="left:67px;top:453px" width="14" height="13" viewBox="0 0 14 13"><path d="M0 1.500C0 .7.600 0 1.400 0h3.800l1.600 2h5.800c.8 0 1.400.6 1.400 1.400v8.200c0 .8-.6 1.400-1.400 1.400H1.400C.6 13 0 12.400 0 11.600z" fill="#f08a1c"/></svg>
<span class="t" style="left:87px;top:450.5px;line-height:18px;font-size:12px;color:#000;letter-spacing:-0.322px;">Triggers</span>
<svg style="left:54px;top:474px" width="8" height="10" viewBox="0 0 8 10"><path d="M1.500 .8l4.200 4.200-4.200 4.200" fill="none" stroke="#9c9c9c" stroke-width="2"/></svg>
<svg style="left:67px;top:471px" width="14" height="13" viewBox="0 0 14 13"><path d="M0 1.500C0 .7.600 0 1.400 0h3.800l1.600 2h5.800c.8 0 1.400.6 1.400 1.400v8.200c0 .8-.6 1.400-1.400 1.400H1.400C.6 13 0 12.400 0 11.600z" fill="#f08a1c"/></svg>
<span class="t" style="left:87px;top:468.5px;line-height:18px;font-size:12px;color:#000;letter-spacing:-0.448px;">Events</span>
<svg style="left:21.9px;top:492px" width="8" height="10" viewBox="0 0 8 10"><path d="M1.500 .8l4.200 4.200-4.200 4.200" fill="none" stroke="#9c9c9c" stroke-width="2"/></svg>
<svg style="left:35px;top:489px" width="14" height="13" viewBox="0 0 14 13"><path d="M0 1.500C0 .7.600 0 1.400 0h3.800l1.600 2h5.800c.8 0 1.400.6 1.400 1.400v8.200c0 .8-.6 1.400-1.400 1.400H1.400C.6 13 0 12.400 0 11.600z" fill="#f08a1c"/><circle cx="7" cy="5.600" r="1.800" fill="none" stroke="#fff3e0" stroke-width="1.100"/><path d="M3.200 11.500c.3-2 1.700-2.900 3.800-2.900s3.500.9 3.800 2.900z" fill="none" stroke="#fff3e0" stroke-width="1.100"/></svg>
<span class="t" style="left:55px;top:486.5px;line-height:18px;font-size:12px;color:#000;letter-spacing:-0.4px;transform:scaleX(0.9542);transform-origin:0 50%;">Users</span>
<svg style="left:21.9px;top:510px" width="8" height="10" viewBox="0 0 8 10"><path d="M1.500 .8l4.200 4.200-4.200 4.200" fill="none" stroke="#9c9c9c" stroke-width="2"/></svg>
<svg style="left:35px;top:507px" width="14" height="13" viewBox="0 0 14 13"><path d="M0 1.500C0 .7.600 0 1.400 0h3.800l1.600 2h5.800c.8 0 1.400.6 1.400 1.400v8.200c0 .8-.6 1.400-1.400 1.400H1.400C.6 13 0 12.400 0 11.600z" fill="#f08a1c"/><path d="M5 5.500h6M7 8h5" stroke="#fff3e0" stroke-width="1.500" fill="none"/></svg>
<span class="t" style="left:55px;top:504.5px;line-height:18px;font-size:12px;color:#000;letter-spacing:0.081px;">Administer</span>
<div style="left:232px;top:144px;width:17px;height:372px;background:#f0f0f0;"></div>
<div style="left:233px;top:162px;width:15px;height:304px;background:#cdcdcd;"></div>
<svg style="left:236px;top:150px" width="9" height="7" viewBox="0 0 9 7"><path d="M1.300 5.300l3.200-3.200 3.200 3.200" fill="none" stroke="#4a4a4a" stroke-width="2"/></svg>
<svg style="left:236px;top:504px" width="9" height="7" viewBox="0 0 9 7"><path d="M1.300 1.700l3.200 3.200 3.200-3.200" fill="none" stroke="#4a4a4a" stroke-width="2"/></svg>
<div style="left:249px;top:76px;width:1px;height:633px;background:#e2e2e2;"></div>
<div style="left:250px;top:76px;width:4px;height:633px;background:#f4f4f4;"></div>
<div style="left:0px;top:516px;width:249px;height:5px;background:#f0f0f0;"></div>
<div style="left:0px;top:515px;width:249px;height:1px;background:#e3e3e3;"></div>
<div style="left:0px;top:521px;width:249px;height:25px;background:#e8e8e8;"></div>
<div style="left:0px;top:521px;width:136px;height:25px;background:#f0f0f0;border-top-right-radius:5px;"></div>
<div style="left:0px;top:545px;width:249px;height:163px;background:#f0f0f0;"></div>
<svg style="left:4px;top:526px" width="15" height="14" viewBox="0 0 15 14"><rect x=".7" y=".7" width="13.600" height="12.600" rx="1" fill="#4db3ea" stroke="#1e8bc3" stroke-width="1.400"/><path d="M.7 2h13.600" stroke="#1e8bc3" stroke-width="2"/></svg>
<span class="t" style="left:23px;top:524.5px;line-height:18px;font-size:12px;color:#000;letter-spacing:-0.218px;">Project - General</span>
<svg style="left:118px;top:529px" width="11" height="11" viewBox="0 0 11 11"><path d="M.6 2.400L2.400 .6 5.500 3.700 8.600 .6 10.400 2.400 7.300 5.500 10.400 8.600 8.600 10.400 5.500 7.300 2.400 10.400 .6 8.600 3.700 5.500z" fill="#f4f4f4" stroke="#4a4a4a" stroke-width="1"/></svg>
<svg style="left:206px;top:528px" width="34" height="11" viewBox="0 0 34 11"><g fill="#f8f8f8" stroke="#5a5a5a" stroke-width="1" shape-rendering="crispEdges"><rect x=".5" y=".5" width="9" height="3"/><rect x="23.500" y=".5" width="9" height="9"/><path d="M23.500 2.500h9"/></g></svg>
<svg style="left:160px;top:549px" width="16" height="16" viewBox="0 0 16 16"><g fill="#1e8bc3"><rect x="6.300" y="0" width="3.400" height="16" rx=".8" transform="rotate(0 8 8)"/><rect x="6.300" y="0" width="3.400" height="16" rx=".8" transform="rotate(45 8 8)"/><rect x="6.300" y="0" width="3.400" height="16" rx=".8" transform="rotate(90 8 8)"/><rect x="6.300" y="0" width="3.400" height="16" rx=".8" transform="rotate(135 8 8)"/><circle cx="8" cy="8" r="5.800"/></g><circle cx="8" cy="8" r="2.600" fill="#f7f7f7"/></svg>
<svg style="left:185px;top:553.5px" width="15" height="7" viewBox="0 0 15 7"><path d="M2.500 1.500h11M.8 4.700h11" stroke="#1e8bc3" stroke-width="1.700"/></svg>
<svg style="left:208px;top:549px" width="14" height="15" viewBox="0 0 14 15"><path d="M6.500 2v11M1 8h11" stroke="#1e8bc3" stroke-width="1.800"/><path d="M9.500 1v4M9.500 5h3" stroke="#1e8bc3" stroke-width="1" fill="none"/></svg>
<svg style="left:229.5px;top:550.5px" width="16" height="12" viewBox="0 0 16 12"><path d="M5 4h8.500" stroke="#1e7fc1" stroke-width="2" fill="none"/><path d="M11.300 .6L15 4l-3.700 3.400z" fill="#1e7fc1"/><path d="M2.500 8h8.500" stroke="#27a344" stroke-width="2" fill="none"/><path d="M4.200 4.600L.5 8l3.700 3.400z" fill="#27a344"/></svg>
<div style="left:0px;top:568px;width:249px;height:125px;background:#fff;"></div>
<div style="left:153px;top:568px;width:1px;height:24px;background:#e5e5e5;"></div>
<span class="t" style="left:5px;top:570.5px;line-height:18px;font-size:12px;color:#000;">Name</span>
<span class="t" style="left:160px;top:570.5px;line-height:18px;font-size:12px;color:#000;letter-spacing:-0.338px;">DataSource</span>
<svg style="left:6.1px;top:597px" width="8" height="10" viewBox="0 0 8 10"><path d="M1.500 .8l4.200 4.200-4.200 4.200" fill="none" stroke="#9c9c9c" stroke-width="2"/></svg>
<svg style="left:18px;top:593.5px" width="16" height="15" viewBox="0 0 16 15"><path d="M0 1.300C0 .6.500 0 1.300 0h3.400l1.500 1.800h5.500c.7 0 1.300.6 1.300 1.300v7.100c0 .7-.6 1.300-1.300 1.300H1.300C.5 11.500 0 10.900 0 10.200z" fill="#f4953a" transform="scale(1.08 1.1)"/><path d="M1.200 4.200h11.600v7.200H1.200z" fill="#f8b978" opacity=".75"/><path d="M12 8l1.100 2.300 2.400.2-1.900 1.500.6 2.400-2.200-1.300-2.200 1.300.6-2.400-1.900-1.500 2.400-.2z" fill="#f08a1c" stroke="#fff" stroke-width=".6"/></svg>
<span class="t" style="left:39px;top:591.5px;line-height:18px;font-size:12px;color:#000;letter-spacing:-0.115px;">Bookmarks</span>
<svg style="left:6.1px;top:615px" width="8" height="10" viewBox="0 0 8 10"><path d="M1.500 .8l4.200 4.200-4.200 4.200" fill="none" stroke="#9c9c9c" stroke-width="2"/></svg>
<svg style="left:19px;top:613px" width="13" height="11.5" viewBox="0 0 13 11.5"><path d="M0 1.300C0 .6.500 0 1.300 0h3.400l1.500 1.800h5.500c.7 0 1.300.6 1.300 1.300v7.100c0 .7-.6 1.300-1.300 1.300H1.300C.5 11.500 0 10.900 0 10.200z" fill="#f08a1c"/><path d="M2.300 4.700h3.300v4.300H2.300zM7.400 4.700h3.300v4.300H7.400z" fill="none" stroke="#fff3e0" stroke-width="1.100"/></svg>
<span class="t" style="left:39px;top:609.5px;line-height:18px;font-size:12px;color:#000;letter-spacing:-0.487px;">ER Diagrams</span>
<svg style="left:6.1px;top:633px" width="8" height="10" viewBox="0 0 8 10"><path d="M1.500 .8l4.200 4.200-4.200 4.200" fill="none" stroke="#9c9c9c" stroke-width="2"/></svg>
<svg style="left:19px;top:631px" width="13" height="11.5" viewBox="0 0 13 11.5"><path d="M0 1.300C0 .6.500 0 1.300 0h3.400l1.500 1.800h5.500c.7 0 1.300.6 1.300 1.300v7.100c0 .7-.6 1.300-1.300 1.300H1.300C.5 11.500 0 10.900 0 10.200z" fill="#f08a1c"/><path d="M3.800 4h3.200v5.500H3.800z" fill="none" stroke="#fff3e0" stroke-width="1.200"/></svg>
<span class="t" style="left:39px;top:627.5px;line-height:18px;font-size:12px;color:#000;letter-spacing:-0.241px;">Scripts</span>
<div style="left:0px;top:693px;width:249px;height:15px;background:#f0f0f0;"></div>
<div style="left:16px;top:693px;width:207px;height:15px;background:#cdcdcd;"></div>
<svg style="left:4px;top:696px" width="7" height="9" viewBox="0 0 7 9"><path d="M5.300 1.300l-3.200 3.200 3.200 3.200" fill="none" stroke="#4a4a4a" stroke-width="2"/></svg>
<svg style="left:238px;top:696px" width="7" height="9" viewBox="0 0 7 9"><path d="M1.700 1.300l3.200 3.200-3.200 3.200" fill="none" stroke="#4a4a4a" stroke-width="2"/></svg>
<div style="left:255px;top:76px;width:1016px;height:25px;background:#f0f0f0;"></div>
<div style="left:255px;top:100px;width:1016px;height:1px;background:#e0e0e0;"></div>
<div style="left:255px;top:101px;width:1016px;height:288px;background:#f0f0f0;"></div>
<div style="left:254px;top:76px;width:1px;height:633px;background:#dedede;"></div>
<div style="left:1270px;top:76px;width:1px;height:633px;background:#dedede;"></div>
<div style="left:909px;top:76px;width:223px;height:25px;background:#fff;border-radius:3px 3px 0 0;"></div>
<svg style="left:260px;top:82px" width="14" height="15" viewBox="0 0 14 15"><path d="M3.500 1h9.500v2.500M11.300 1v11c0 1.200-.8 2-2 2H1.200c1.100 0 1.900-.8 1.900-2V1.200" fill="none" stroke="#1e8bc3" stroke-width="1.900"/><path d="M.5 13h8.500" stroke="#1e8bc3" stroke-width="2.200" fill="none"/></svg>
<span class="t" style="left:278.6px;top:79.5px;line-height:18px;font-size:12px;color:#000;letter-spacing:-0.037px;">*&lt;Localhost (MariaDB)&gt; Script-1</span>
<svg style="left:482px;top:82px" width="14" height="15" viewBox="0 0 14 15"><path d="M3.500 1h9.500v2.500M11.300 1v11c0 1.200-.8 2-2 2H1.200c1.100 0 1.900-.8 1.900-2V1.200" fill="none" stroke="#1e8bc3" stroke-width="1.900"/><path d="M.5 13h8.500" stroke="#1e8bc3" stroke-width="2.200" fill="none"/></svg>
<span class="t" style="left:500.7px;top:79.5px;line-height:18px;font-size:12px;color:#000;letter-spacing:-0.051px;">*&lt;Localhost (MariaDB)&gt; Script</span>
<svg style="left:693.5px;top:82px" width="14" height="15" viewBox="0 0 14 15"><path d="M3.500 1h9.500v2.500M11.300 1v11c0 1.200-.8 2-2 2H1.200c1.100 0 1.900-.8 1.900-2V1.200" fill="none" stroke="#1e8bc3" stroke-width="1.900"/><path d="M.5 13h8.500" stroke="#1e8bc3" stroke-width="2.200" fill="none"/></svg>
<span class="t" style="left:711.9px;top:79.5px;line-height:18px;font-size:12px;color:#000;letter-spacing:-0.037px;">*&lt;Localhost (MariaDB)&gt; Script-3</span>
<svg style="left:915px;top:82px" width="14" height="15" viewBox="0 0 14 15"><path d="M3.500 1h9.500v2.500M11.300 1v11c0 1.200-.8 2-2 2H1.200c1.100 0 1.900-.8 1.900-2V1.200" fill="none" stroke="#1e8bc3" stroke-width="1.900"/><path d="M.5 13h8.500" stroke="#1e8bc3" stroke-width="2.200" fill="none"/></svg>
<span class="t" style="left:933.5px;top:79.5px;line-height:18px;font-size:12px;color:#000;letter-spacing:-0.008px;">*&lt;Localhost (MariaDB)&gt; Script-4</span>
<svg style="left:1113.5px;top:84px" width="11" height="11" viewBox="0 0 11 11"><path d="M.6 2.400L2.400 .6 5.500 3.700 8.600 .6 10.400 2.400 7.300 5.500 10.400 8.600 8.600 10.400 5.500 7.300 2.400 10.400 .6 8.600 3.700 5.500z" fill="#f4f4f4" stroke="#4a4a4a" stroke-width="1"/></svg>
<svg style="left:1136.5px;top:82px" width="14" height="14" viewBox="0 0 14 14"><g fill="#2a9fd6"><ellipse cx="7" cy="2.900" rx="6" ry="2.700"/><path d="M1 4.800c1.200 1.700 3.400 2.200 6 2.200s4.800-.5 6-2.200v2.300c-1 1.600-3.400 2.200-6 2.200s-5-.6-6-2.200z"/><path d="M1 8.600c1.200 1.700 3.400 2.200 6 2.200s4.800-.5 6-2.200v2.300c-1 1.800-3.400 2.500-6 2.500s-5-.7-6-2.500z"/></g></svg>
<span class="t" style="left:1155.7px;top:79.5px;line-height:18px;font-size:12px;color:#000;letter-spacing:-0.211px;">test</span>
<svg style="left:1227px;top:83px" width="34" height="11" viewBox="0 0 34 11"><g fill="#f8f8f8" stroke="#5a5a5a" stroke-width="1" shape-rendering="crispEdges"><rect x=".5" y=".5" width="9" height="3"/><rect x="23.500" y=".5" width="9" height="9"/><path d="M23.500 2.500h9"/></g></svg>
<div style="left:279px;top:106px;width:974px;height:268px;background:#fff;"></div>
<div style="left:279px;top:374px;width:43px;height:15px;background:#fff;"></div>
<div style="left:291px;top:106px;width:21px;height:268px;background:#e6e6f5;"></div>
<span class="t m" style="left:291.3px;top:108.2px;line-height:15px;font-size:12.3px;color:#7a7a7a;letter-spacing:-0.380px;">143</span>
<span class="t m" style="left:291.3px;top:123.2px;line-height:15px;font-size:12.3px;color:#7a7a7a;letter-spacing:-0.380px;">144</span>
<span class="t m" style="left:291.3px;top:138.2px;line-height:15px;font-size:12.3px;color:#7a7a7a;letter-spacing:-0.380px;">145</span>
<span class="t m" style="left:291.3px;top:153.2px;line-height:15px;font-size:12.3px;color:#7a7a7a;letter-spacing:-0.380px;">146</span>
<span class="t m" style="left:291.3px;top:168.2px;line-height:15px;font-size:12.3px;color:#7a7a7a;letter-spacing:-0.380px;">147</span>
<span class="t m" style="left:291.3px;top:183.2px;line-height:15px;font-size:12.3px;color:#7a7a7a;letter-spacing:-0.380px;">148</span>
<span class="t m" style="left:291.3px;top:198.2px;line-height:15px;font-size:12.3px;color:#7a7a7a;letter-spacing:-0.380px;">149</span>
<span class="t m" style="left:291.3px;top:213.2px;line-height:15px;font-size:12.3px;color:#7a7a7a;letter-spacing:-0.380px;">150</span>
<span class="t m" style="left:291.3px;top:228.2px;line-height:15px;font-size:12.3px;color:#7a7a7a;letter-spacing:-0.380px;">151</span>
<span class="t m" style="left:291.3px;top:243.2px;line-height:15px;font-size:12.3px;color:#7a7a7a;letter-spacing:-0.380px;">152</span>
<span class="t m" style="left:291.3px;top:258.2px;line-height:15px;font-size:12.3px;color:#7a7a7a;letter-spacing:-0.380px;">153</span>
<span class="t m" style="left:291.3px;top:273.2px;line-height:15px;font-size:12.3px;color:#7a7a7a;letter-spacing:-0.380px;">154</span>
<span class="t m" style="left:291.3px;top:288.2px;line-height:15px;font-size:12.3px;color:#7a7a7a;letter-spacing:-0.380px;">155</span>
<span class="t m" style="left:291.3px;top:303.2px;line-height:15px;font-size:12.3px;color:#7a7a7a;letter-spacing:-0.380px;">156</span>
<span class="t m" style="left:291.3px;top:318.2px;line-height:15px;font-size:12.3px;color:#7a7a7a;letter-spacing:-0.380px;">157</span>
<span class="t m" style="left:291.3px;top:333.2px;line-height:15px;font-size:12.3px;color:#7a7a7a;letter-spacing:-0.380px;">158</span>
<span class="t m" style="left:291.3px;top:348.2px;line-height:15px;font-size:12.3px;color:#7a7a7a;letter-spacing:-0.380px;">159</span>
<span class="t m" style="left:291.3px;top:363.2px;line-height:15px;font-size:12.3px;color:#7a7a7a;letter-spacing:-0.380px;">160</span>
<div style="left:324px;top:301px;width:929px;height:30px;background:#0078d7;"></div>
<span class="t m b" style="left:324px;top:303.1px;line-height:15px;font-size:12.3px;color:#fff;letter-spacing:-0.379px;">EXPLAIN</span>
<span class="t m b" style="left:324px;top:318.1px;line-height:15px;font-size:12.3px;color:#fff;letter-spacing:-0.380px;">SELECT</span>
<span class="t m" style="left:373px;top:318.1px;line-height:15px;font-size:12.3px;color:#fff;letter-spacing:-0.391px;">*</span>
<span class="t m b" style="left:387px;top:318.1px;line-height:15px;font-size:12.3px;color:#fff;letter-spacing:-0.383px;">FROM</span>
<span class="t m" style="left:422px;top:318.1px;line-height:15px;font-size:12.3px;color:#fff;letter-spacing:-0.380px;">tbAtiv</span>
<span class="t m b" style="left:471px;top:318.1px;line-height:15px;font-size:12.3px;color:#fff;letter-spacing:-0.381px;">WHERE</span>
<span class="t m" style="left:513px;top:318.1px;line-height:15px;font-size:12.3px;color:#fff;letter-spacing:-0.380px;">usuario = &#x27;G&#x27;</span>
<span class="t m b" style="left:324px;top:348.1px;line-height:15px;font-size:12.3px;color:#7f0000;letter-spacing:-0.379px;">WITH RECURSIVE</span>
<span class="t m" style="left:429px;top:348.1px;line-height:15px;font-size:12.3px;color:#000;letter-spacing:-0.381px;">Datas</span>
<span class="t m b" style="left:471px;top:348.1px;line-height:15px;font-size:12.3px;color:#7f0000;letter-spacing:-0.383px;">AS</span>
<span class="t m" style="left:492px;top:348.1px;line-height:15px;font-size:12.3px;color:#000;letter-spacing:-0.391px;">(</span>
<span class="t m" style="left:365.6px;top:363.1px;line-height:15px;font-size:12.3px;color:#808080;letter-spacing:-0.379px;">-- &quot;Membro Âncora&quot;</span>
<svg style="left:312px;top:304.1px" width="9" height="9" viewBox="0 0 9 9"><circle cx="4.600" cy="4.500" r="3.700" fill="#fff" stroke="#8a9aaa" stroke-width="1"/><path d="M2.600 4.500h4" stroke="#5a6a7a" stroke-width="1"/></svg>
<svg style="left:312px;top:349.1px" width="9" height="9" viewBox="0 0 9 9"><circle cx="4.600" cy="4.500" r="3.700" fill="#fff" stroke="#8a9aaa" stroke-width="1"/><path d="M2.600 4.500h4" stroke="#5a6a7a" stroke-width="1"/></svg>
<svg style="left:263px;top:109px" width="12" height="13" viewBox="0 0 12 13"><path d="M0 0l7 5.500L0 11z" fill="#f08a1c"/></svg>
<svg style="left:263px;top:131px" width="12" height="13" viewBox="0 0 12 13"><path d="M0 0l7 5.500L0 11z" fill="#f08a1c"/><path d="M8.500 7v5M6 9.500h5" stroke="#27a344" stroke-width="1.100"/></svg>
<svg style="left:260px;top:152px" width="15" height="15" viewBox="0 0 15 15"><path d="M2.800 1h10v2.300M11 1v10.500c0 1.200-.8 2-2 2H.8c1.100 0 2-.8 2-2V1" fill="none" stroke="#f08a1c" stroke-width="1.900"/><path d="M.3 12.800h8.500" stroke="#f08a1c" stroke-width="2.200"/><path d="M5 4l4 3-4 3z" fill="#f08a1c"/></svg>
<svg style="left:260px;top:175px" width="15" height="15" viewBox="0 0 15 15"><path d="M2.800 9V1h10.500v2.500" fill="none" stroke="#f08a1c" stroke-width="1.900"/><path d="M11.800 1h2v2.500z" fill="#f08a1c"/><path d="M.3 12.800h5" stroke="#f08a1c" stroke-width="2.400"/><path d="M5 3.500l4.500 3.300L5 10z" fill="#f08a1c"/><path d="M10.500 9v5M8 11.500h5" stroke="#27a344" stroke-width="1.100"/></svg>
<svg style="left:260px;top:198px" width="14" height="15" viewBox="0 0 14 15"><path d="M2.500 .8h9.500v11.500c0 1-.7 1.700-1.700 1.700H.8c.9 0 1.700-.7 1.700-1.700z" fill="none" stroke="#1e8bc3" stroke-width="1.400"/><path d="M.3 13.500h9" stroke="#1e8bc3" stroke-width="1.600"/><path d="M4.500 3.500h1.500M7 3.500h3M4.500 6h1.500M7 6h3M4.500 8.500h1.500M7 8.500h3M4.500 11h1.500M7 11h3" stroke="#1e8bc3" stroke-width="1"/></svg>
<svg style="left:259px;top:223px" width="15" height="15" viewBox="0 0 16 16"><g fill="#1e8bc3"><rect x="6.300" y="0" width="3.400" height="16" rx=".8" transform="rotate(0 8 8)"/><rect x="6.300" y="0" width="3.400" height="16" rx=".8" transform="rotate(45 8 8)"/><rect x="6.300" y="0" width="3.400" height="16" rx=".8" transform="rotate(90 8 8)"/><rect x="6.300" y="0" width="3.400" height="16" rx=".8" transform="rotate(135 8 8)"/><circle cx="8" cy="8" r="5.800"/></g><circle cx="8" cy="8" r="2.600" fill="#f7f7f7"/></svg>
<svg style="left:259px;top:247px" width="14" height="2" viewBox="0 0 14 2"><rect x="0" y="0" width="2" height="1.500" fill="#9a9a9a"/><rect x="4" y="0" width="2" height="1.500" fill="#9a9a9a"/><rect x="8" y="0" width="2" height="1.500" fill="#9a9a9a"/><rect x="12" y="0" width="2" height="1.500" fill="#9a9a9a"/></svg>
<span class="t r" style="left:267px;top:282.5px;line-height:16px;font-size:12px;color:#000;transform:translate(-50%,-50%) rotate(-90deg);letter-spacing:0.161px;margin-left:0.081px;">Output</span>
<svg style="left:260px;top:306.5px" width="14" height="13" viewBox="0 0 14 13"><path d="M4 3.500H.7v9h12.600v-9H10" fill="none" stroke="#1e8bc3" stroke-width="1.400"/><path d="M7 10.500V1.500M4.500 4L7 1.500 9.500 4" fill="none" stroke="#1e8bc3" stroke-width="1.300"/></svg>
<span class="t r" style="left:267px;top:353px;line-height:16px;font-size:12px;color:#000;transform:translate(-50%,-50%) rotate(-90deg);letter-spacing:-0.344px;margin-left:-0.172px;">Log</span>
<svg style="left:259px;top:366px" width="15" height="14" viewBox="0 0 15 14"><path d="M.7 13V4.500h3l1.500-2h4M.7 13h11V8.500" fill="none" stroke="#1e8bc3" stroke-width="1.400"/><rect x="10" y="1" width="4.500" height="4.500" fill="#e8352a"/></svg>
<div style="left:1253px;top:106px;width:17px;height:268px;background:#f0f0f0;"></div>
<div style="left:1254px;top:300px;width:15px;height:21px;background:#cdcdcd;"></div>
<svg style="left:1256px;top:111.5px" width="9" height="7" viewBox="0 0 9 7"><path d="M1.300 5.300l3.200-3.200 3.200 3.200" fill="none" stroke="#4a4a4a" stroke-width="2"/></svg>
<svg style="left:1256px;top:361.5px" width="9" height="7" viewBox="0 0 9 7"><path d="M1.300 1.700l3.200 3.200 3.200-3.200" fill="none" stroke="#4a4a4a" stroke-width="2"/></svg>
<div style="left:322px;top:374px;width:931px;height:15px;background:#f0f0f0;"></div>
<div style="left:339px;top:374px;width:404px;height:15px;background:#cdcdcd;"></div>
<svg style="left:327px;top:377px" width="7" height="9" viewBox="0 0 7 9"><path d="M5.300 1.300l-3.200 3.200 3.200 3.200" fill="none" stroke="#4a4a4a" stroke-width="2"/></svg>
<svg style="left:1240.5px;top:377px" width="7" height="9" viewBox="0 0 7 9"><path d="M1.700 1.300l3.200 3.200-3.200 3.200" fill="none" stroke="#4a4a4a" stroke-width="2"/></svg>
<div style="left:1253px;top:374px;width:17px;height:15px;background:#f0f0f0;"></div>
<div style="left:255px;top:393px;width:1016px;height:23px;background:#f0f0f0;"></div>
<div style="left:255px;top:415px;width:1016px;height:1px;background:#d0d0d0;"></div>
<div style="left:255px;top:416px;width:1016px;height:292px;background:#f0f0f0;"></div>
<svg style="left:261px;top:399px" width="13" height="13" viewBox="0 0 13 13"><rect x=".7" y=".7" width="11.600" height="11.600" fill="#fff" stroke="#1e8bc3" stroke-width="1.400"/><path d="M.7 4.500h11.600M.7 8.400h11.600M4.500 .7v11.600M8.400 .7v11.600" stroke="#1e8bc3" stroke-width="1.200"/></svg>
<span class="t" style="left:279.5px;top:396.5px;line-height:18px;font-size:12px;color:#000;letter-spacing:-0.394px;">tbacoes 1</span>
<div style="left:355px;top:395px;width:96px;height:22px;background:#fbfbfb;border:1px solid #b4b4b4;border-bottom:none;border-radius:5px 5px 0 0;"></div>
<svg style="left:361px;top:399px" width="13" height="13" viewBox="0 0 13 13"><rect x=".7" y=".7" width="11.600" height="11.600" fill="#fff" stroke="#1e8bc3" stroke-width="1.400"/><path d="M.7 4.500h11.600M.7 8.400h11.600M4.500 .7v11.600M8.400 .7v11.600" stroke="#1e8bc3" stroke-width="1.200"/></svg>
<span class="t" style="left:379px;top:396.5px;line-height:18px;font-size:12px;color:#000;letter-spacing:-0.503px;">Results 2</span>
<svg style="left:433.5px;top:401px" width="11" height="11" viewBox="0 0 11 11"><path d="M.6 2.400L2.400 .6 5.500 3.700 8.600 .6 10.400 2.400 7.300 5.500 10.400 8.600 8.600 10.400 5.500 7.300 2.400 10.400 .6 8.600 3.700 5.500z" fill="#f4f4f4" stroke="#4a4a4a" stroke-width="1"/></svg>
<div style="left:258px;top:419px;width:796px;height:24px;background:#fff;border:1px solid #d4d4d4;"></div>
<svg style="left:262px;top:424px" width="15" height="13" viewBox="0 0 15 13"><path d="M6 2.500h8M10 2.500V12M8 12h4" fill="none" stroke="#1e8bc3" stroke-width="1.200"/><path d="M2.500 5L.7 7l1.800 2M4.500 5l1.800 2-1.800 2" fill="none" stroke="#1e8bc3" stroke-width="1"/></svg>
<span class="t" style="left:280px;top:420.5px;line-height:18px;font-size:12px;color:#3a8a3a;letter-spacing:-0.573px;">EXPLAIN SELECT * FROM tbAtiv WHERE usua</span>
<div style="left:521px;top:424px;width:1px;height:14px;background:#8a8a8a;"></div>
<svg style="left:526px;top:423px" width="15" height="15" viewBox="0 0 15 15"><path d="M.5 4.500V.5h4M10.500 .5h4v4M14.500 10.500v4h-4M4.500 14.500h-4v-4M1 1l4 4M14 1l-4 4M14 14l-4-4M1 14l4-4" fill="none" stroke="#5a5a5a" stroke-width="1.100"/></svg>
<span class="t" style="left:547.5px;top:420.5px;line-height:18px;font-size:12px;color:#9a9a9a;letter-spacing:-0.271px;font-style:italic;">Enter a SQL expression to filter results (use Ctrl+Space)</span>
<svg style="left:1015px;top:424px" width="7" height="12" viewBox="0 0 7 12"><path d="M0 0l6.500 6L0 12z" fill="#7a7a7a"/></svg>
<div style="left:1031px;top:423px;width:1px;height:15px;background:#b0b0b0;"></div>
<svg style="left:1036px;top:427.5px" width="10" height="4" viewBox="0 0 10 4"><path d="M0 0h10l-5.0 4z" fill="#6a6a6a"/></svg>
<svg style="left:1062px;top:423px" width="16" height="15" viewBox="0 0 16 15"><path d="M9 1l6 5-6 7H4.500L1 10z" fill="#d9d9d9" stroke="#a8a8a8" stroke-width="1"/><path d="M4.500 6l5.500 5" stroke="#a8a8a8"/><path d="M9 14.500h6" stroke="#a8a8a8"/></svg>
<svg style="left:1085px;top:423px" width="16" height="15" viewBox="0 0 16 15"><path d="M.5 .5h11L7.500 6v7L5 11V6z" fill="none" stroke="#a8a8a8" stroke-width="1"/><rect x="10" y="9" width="5" height="5" fill="none" stroke="#a8a8a8"/></svg>
<svg style="left:1107px;top:423px" width="16" height="15" viewBox="0 0 16 15"><path d="M.7 .7h13v6M.7 .7v12h6" fill="none" stroke="#1e8bc3" stroke-width="1.400"/><path d="M.7 .7h13v3.300H.7z" fill="#1e8bc3"/><path d="M.7 8h6M5 4v8.500" stroke="#1e8bc3" stroke-width="1.200"/><rect x="10.500" y="7" width="2.200" height="8" rx=".5" fill="#1e8bc3" transform="rotate(0 11.600 11)"/><rect x="10.500" y="7" width="2.200" height="8" rx=".5" fill="#1e8bc3" transform="rotate(45 11.600 11)"/><rect x="10.500" y="7" width="2.200" height="8" rx=".5" fill="#1e8bc3" transform="rotate(90 11.600 11)"/><rect x="10.500" y="7" width="2.200" height="8" rx=".5" fill="#1e8bc3" transform="rotate(135 11.600 11)"/><circle cx="11.600" cy="11" r="1.200" fill="#f0f0f0"/></svg>
<svg style="left:1129px;top:423px" width="2" height="14.9" viewBox="0 0 2 14.899999999999999"><rect x="0" y="0" width="2" height="2" fill="#bdbdbd"/><rect x="0" y="4.3" width="2" height="2" fill="#bdbdbd"/><rect x="0" y="8.6" width="2" height="2" fill="#bdbdbd"/><rect x="0" y="12.9" width="2" height="2" fill="#bdbdbd"/></svg>
<svg style="left:1139px;top:423px" width="16" height="16" viewBox="0 0 16 16"><path d="M2 7a5.500 5.500 0 0 1 9.500-3M14 9a5.500 5.500 0 0 1-9.500 3" fill="none" stroke="#1e8bc3" stroke-width="1.600"/><path d="M12.500 .8v4h-4zM3.500 15.200v-4h4z" fill="#1e8bc3"/><path d="M5 8a3 3 0 0 1 5.200-1.500M11 8a3 3 0 0 1-5.200 1.500" fill="none" stroke="#1e8bc3" stroke-width="1"/></svg>
<svg style="left:1162px;top:427px" width="7" height="4" viewBox="0 0 7 4"><path d="M0 0h7l-3.5 4z" fill="#1a1a1a"/></svg>
<svg style="left:1175px;top:423px" width="2" height="14.9" viewBox="0 0 2 14.899999999999999"><rect x="0" y="0" width="2" height="2" fill="#bdbdbd"/><rect x="0" y="4.3" width="2" height="2" fill="#bdbdbd"/><rect x="0" y="8.6" width="2" height="2" fill="#bdbdbd"/><rect x="0" y="12.9" width="2" height="2" fill="#bdbdbd"/></svg>
<svg style="left:1184px;top:424px" width="17" height="13" viewBox="0 0 17 13"><path d="M7 1L1 6.500 7 12V8.500h9v-4H7z" fill="#9a9a9a"/></svg>
<svg style="left:1208px;top:427px" width="7" height="4" viewBox="0 0 7 4"><path d="M0 0h7l-3.5 4z" fill="#7a7a7a"/></svg>
<svg style="left:1224px;top:424px" width="17" height="13" viewBox="0 0 17 13"><g transform="translate(17 0) scale(-1 1)"><path d="M7 1L1 6.500 7 12V8.500h9v-4H7z" fill="#9a9a9a"/></g></svg>
<svg style="left:1246px;top:427px" width="7" height="4" viewBox="0 0 7 4"><path d="M0 0h7l-3.5 4z" fill="#7a7a7a"/></svg>
<div style="left:257px;top:446px;width:20px;height:59px;background:#e1e1e1;border:1px solid #c6c6c6;"></div>
<span class="t r" style="left:266.5px;top:468px;line-height:16px;font-size:12px;color:#000;transform:translate(-50%,-50%) rotate(-90deg);letter-spacing:-0.168px;margin-left:-0.084px;">Grid</span>
<svg style="left:260px;top:483px" width="14" height="14" viewBox="0 0 13 13"><rect x=".7" y=".7" width="11.600" height="11.600" fill="#fff" stroke="#1e8bc3" stroke-width="1.400"/><path d="M.7 4.500h11.600M.7 8.400h11.600M4.500 .7v11.600M8.400 .7v11.600" stroke="#1e8bc3" stroke-width="1.200"/></svg>
<span class="t r" style="left:266.5px;top:528px;line-height:16px;font-size:12px;color:#000;transform:translate(-50%,-50%) rotate(-90deg);letter-spacing:-0.254px;margin-left:-0.127px;">Text</span>
<svg style="left:260px;top:545px" width="14" height="16" viewBox="0 0 14 16"><path d="M3 1.500h9M7.500 1.500v8M5.500 9.500h4" fill="none" stroke="#1e8bc3" stroke-width="1.200"/><path d="M2.500 10.500L.7 12.500l1.800 2M4.500 10.500l1.800 2-1.800 2" fill="none" stroke="#1e8bc3" stroke-width="1" transform="translate(4 0)"/></svg>
<span class="t r" style="left:266.8px;top:640.5px;line-height:16px;font-size:12px;color:#000;transform:translate(-50%,-50%) rotate(-90deg);letter-spacing:-0.531px;margin-left:-0.266px;">Record</span>
<svg style="left:260px;top:662.5px" width="16" height="14" viewBox="0 0 16 14"><path d="M.7 13V4.500h3.500l1.500-2h3M.7 13h11V8.500" fill="none" stroke="#1e8bc3" stroke-width="1.400"/><circle cx="12" cy="4.500" r="3" fill="#1e8bc3"/><path d="M10.500 4.500h3" stroke="#fff" stroke-width="1"/></svg>
<div style="left:309px;top:446px;width:937px;height:240px;background:#fff;"></div>
<div style="left:374px;top:446px;width:804px;height:27px;background:#f7f7f7;"></div>
<div style="left:1179px;top:446px;width:67px;height:27px;background:#f0f0f0;"></div>
<div style="left:309px;top:446px;width:65px;height:27px;background:#6daee6;"></div>
<div style="left:374px;top:474px;width:804px;height:18px;background:#dbe5f3;"></div>
<div style="left:279px;top:474px;width:29px;height:18px;background:#6daee6;"></div>
<div style="left:374px;top:446px;width:1px;height:27px;background:#6daee6;"></div>
<div style="left:374px;top:473px;width:1px;height:213px;background:#ededed;"></div>
<div style="left:488px;top:446px;width:1px;height:27px;background:#9a9a9a;"></div>
<div style="left:488px;top:473px;width:1px;height:213px;background:#ededed;"></div>
<div style="left:569px;top:446px;width:1px;height:27px;background:#9a9a9a;"></div>
<div style="left:569px;top:473px;width:1px;height:213px;background:#ededed;"></div>
<div style="left:648px;top:446px;width:1px;height:27px;background:#9a9a9a;"></div>
<div style="left:648px;top:473px;width:1px;height:213px;background:#ededed;"></div>
<div style="left:776px;top:446px;width:1px;height:27px;background:#9a9a9a;"></div>
<div style="left:776px;top:473px;width:1px;height:213px;background:#ededed;"></div>
<div style="left:850px;top:446px;width:1px;height:27px;background:#9a9a9a;"></div>
<div style="left:850px;top:473px;width:1px;height:213px;background:#ededed;"></div>
<div style="left:945px;top:446px;width:1px;height:27px;background:#9a9a9a;"></div>
<div style="left:945px;top:473px;width:1px;height:213px;background:#ededed;"></div>
<div style="left:1015px;top:446px;width:1px;height:27px;background:#9a9a9a;"></div>
<div style="left:1015px;top:473px;width:1px;height:213px;background:#ededed;"></div>
<div style="left:1096px;top:446px;width:1px;height:27px;background:#9a9a9a;"></div>
<div style="left:1096px;top:473px;width:1px;height:213px;background:#ededed;"></div>
<div style="left:1178px;top:446px;width:1px;height:27px;background:#9a9a9a;"></div>
<div style="left:1178px;top:473px;width:1px;height:213px;background:#ededed;"></div>
<div style="left:375px;top:473px;width:804px;height:1px;background:#909090;"></div>
<div style="left:309px;top:492px;width:937px;height:1px;background:#efefef;"></div>
<div style="left:309px;top:511px;width:937px;height:1px;background:#efefef;"></div>
<div style="left:309px;top:530px;width:937px;height:1px;background:#efefef;"></div>
<div style="left:309px;top:549px;width:937px;height:1px;background:#efefef;"></div>
<div style="left:309px;top:568px;width:937px;height:1px;background:#efefef;"></div>
<div style="left:309px;top:587px;width:937px;height:1px;background:#efefef;"></div>
<div style="left:309px;top:606px;width:937px;height:1px;background:#efefef;"></div>
<div style="left:309px;top:625px;width:937px;height:1px;background:#efefef;"></div>
<div style="left:309px;top:644px;width:937px;height:1px;background:#efefef;"></div>
<div style="left:309px;top:663px;width:937px;height:1px;background:#efefef;"></div>
<div style="left:309px;top:682px;width:937px;height:1px;background:#efefef;"></div>
<div style="left:308px;top:446px;width:1px;height:240px;background:#111;"></div>
<div style="left:309px;top:446px;width:1px;height:240px;background:rgba(0,0,0,.28);"></div>
<div style="left:279px;top:473px;width:30px;height:1px;background:#111;"></div>
<div style="left:279px;top:492px;width:30px;height:1px;background:#111;"></div>
<div style="left:279px;top:511px;width:30px;height:1px;background:#111;"></div>
<div style="left:279px;top:530px;width:30px;height:1px;background:#111;"></div>
<div style="left:279px;top:549px;width:30px;height:1px;background:#111;"></div>
<div style="left:279px;top:568px;width:30px;height:1px;background:#111;"></div>
<div style="left:279px;top:587px;width:30px;height:1px;background:#111;"></div>
<div style="left:279px;top:606px;width:30px;height:1px;background:#111;"></div>
<div style="left:279px;top:625px;width:30px;height:1px;background:#111;"></div>
<div style="left:279px;top:644px;width:30px;height:1px;background:#111;"></div>
<div style="left:279px;top:663px;width:30px;height:1px;background:#111;"></div>
<div style="left:279px;top:682px;width:30px;height:1px;background:#111;"></div>
<div style="left:308px;top:473px;width:67px;height:20px;background:#5ea2e3;border:1px solid #0a0a0a;box-shadow:inset 0 0 0 1px rgba(0,0,0,.35);"></div>
<span class="t" style="left:283.5px;top:474px;line-height:18px;font-size:12px;color:#000;letter-spacing:-0.188px;font-weight:bold;">1</span>
<span class="t" style="left:361px;top:473.5px;line-height:18px;font-size:12px;color:#fff;letter-spacing:-0.188px;">1</span>
<svg style="left:314.6px;top:451.5px" width="18" height="17" viewBox="0 0 18 17"><text x="-.3" y="11.500" font-family="Liberation Sans, sans-serif" font-size="11" fill="#1f7fd0" textLength="17" lengthAdjust="spacingAndGlyphs">123</text><g transform="translate(8.3 9.6)"><rect x=".6" y="2.800" width="6" height="3.800" fill="#6daee6" stroke="#f4f9ff" stroke-width="1.200"/><path d="M1.800 2.800V1.800a1.800 1.800 0 0 1 3.600 0v1" fill="none" stroke="#f4f9ff" stroke-width="1.200"/></g></svg>
<span class="t" style="left:334.5px;top:450.5px;line-height:18px;font-size:12px;color:#000;letter-spacing:-0.172px;">id</span>
<svg style="left:354.5px;top:451.5px" width="18" height="16" viewBox="0 0 18 16"><path d="M.8 1.800h7.600L5.600 5.500v7.500L3.600 11.500V5.500z" fill="#7ab4e6" stroke="#a9d0f2" stroke-width="1"/><path d="M13 4v8" stroke="#4a94d4" stroke-width="1.300"/><path d="M10.300 5.300L13 1.800l2.700 3.500zM10.300 10.700L13 14.200l2.700-3.500z" fill="#4a94d4"/></svg>
<svg style="left:380.8px;top:451.5px" width="18" height="17" viewBox="0 0 18 17"><text x="-.2" y="11" font-family="Liberation Sans, sans-serif" font-size="10" font-weight="bold" fill="#1e8fd0" stroke="#1e8fd0" stroke-width=".35" textLength="16.500" lengthAdjust="spacingAndGlyphs">ABC</text><g transform="translate(8.5 9.2)"><rect x=".6" y="2.800" width="6" height="3.800" fill="#fff" stroke="#1e8bc3" stroke-width="1.200"/><path d="M1.800 2.800V1.800a1.800 1.800 0 0 1 3.600 0v1" fill="none" stroke="#1e8bc3" stroke-width="1.200"/></g></svg>
<span class="t" style="left:400.5px;top:450.5px;line-height:18px;font-size:12px;color:#000;letter-spacing:-0.291px;">select_type</span>
<svg style="left:469px;top:451.5px" width="18" height="16" viewBox="0 0 18 16"><path d="M.8 1.800h7.600L5.600 5.500v7.500L3.600 11.500V5.500z" fill="#8cc6ef" stroke="#3f97d8" stroke-width="1"/><path d="M13 4v8" stroke="#2f86c8" stroke-width="1.300"/><path d="M10.300 5.300L13 1.800l2.700 3.500zM10.300 10.700L13 14.200l2.700-3.500z" fill="#2f86c8"/></svg>
<span class="t" style="left:380.5px;top:473.5px;line-height:18px;font-size:12px;color:#000;letter-spacing:-0.4px;transform:scaleX(0.9251);transform-origin:0 50%;">SIMPLE</span>
<svg style="left:494.8px;top:451.5px" width="18" height="17" viewBox="0 0 18 17"><text x="-.2" y="11" font-family="Liberation Sans, sans-serif" font-size="10" font-weight="bold" fill="#1e8fd0" stroke="#1e8fd0" stroke-width=".35" textLength="16.500" lengthAdjust="spacingAndGlyphs">ABC</text><g transform="translate(8.5 9.2)"><rect x=".6" y="2.800" width="6" height="3.800" fill="#fff" stroke="#1e8bc3" stroke-width="1.200"/><path d="M1.800 2.800V1.800a1.800 1.800 0 0 1 3.600 0v1" fill="none" stroke="#1e8bc3" stroke-width="1.200"/></g></svg>
<span class="t" style="left:514.5px;top:450.5px;line-height:18px;font-size:12px;color:#000;letter-spacing:-0.006px;">table</span>
<svg style="left:550px;top:451.5px" width="18" height="16" viewBox="0 0 18 16"><path d="M.8 1.800h7.600L5.600 5.500v7.500L3.600 11.500V5.500z" fill="#8cc6ef" stroke="#3f97d8" stroke-width="1"/><path d="M13 4v8" stroke="#2f86c8" stroke-width="1.300"/><path d="M10.300 5.300L13 1.800l2.700 3.500zM10.300 10.700L13 14.200l2.700-3.500z" fill="#2f86c8"/></svg>
<span class="t" style="left:494.5px;top:473.5px;line-height:18px;font-size:12px;color:#000;letter-spacing:0.247px;">tbAtiv</span>
<svg style="left:575.8px;top:451.5px" width="18" height="17" viewBox="0 0 18 17"><text x="-.2" y="11" font-family="Liberation Sans, sans-serif" font-size="10" font-weight="bold" fill="#1e8fd0" stroke="#1e8fd0" stroke-width=".35" textLength="16.500" lengthAdjust="spacingAndGlyphs">ABC</text><g transform="translate(8.5 9.2)"><rect x=".6" y="2.800" width="6" height="3.800" fill="#fff" stroke="#1e8bc3" stroke-width="1.200"/><path d="M1.800 2.800V1.800a1.800 1.800 0 0 1 3.600 0v1" fill="none" stroke="#1e8bc3" stroke-width="1.200"/></g></svg>
<span class="t" style="left:595.5px;top:450.5px;line-height:18px;font-size:12px;color:#000;letter-spacing:0.078px;">type</span>
<svg style="left:629px;top:451.5px" width="18" height="16" viewBox="0 0 18 16"><path d="M.8 1.800h7.600L5.600 5.500v7.500L3.600 11.500V5.500z" fill="#8cc6ef" stroke="#3f97d8" stroke-width="1"/><path d="M13 4v8" stroke="#2f86c8" stroke-width="1.300"/><path d="M10.300 5.300L13 1.800l2.700 3.500zM10.300 10.700L13 14.200l2.700-3.500z" fill="#2f86c8"/></svg>
<span class="t" style="left:575.5px;top:473.5px;line-height:18px;font-size:12px;color:#000;letter-spacing:-0.4px;transform:scaleX(0.9177);transform-origin:0 50%;">ALL</span>
<svg style="left:654.8px;top:451.5px" width="18" height="17" viewBox="0 0 18 17"><text x="-.2" y="11" font-family="Liberation Sans, sans-serif" font-size="10" font-weight="bold" fill="#1e8fd0" stroke="#1e8fd0" stroke-width=".35" textLength="16.500" lengthAdjust="spacingAndGlyphs">ABC</text><g transform="translate(8.5 9.2)"><rect x=".6" y="2.800" width="6" height="3.800" fill="#fff" stroke="#1e8bc3" stroke-width="1.200"/><path d="M1.800 2.800V1.800a1.800 1.800 0 0 1 3.600 0v1" fill="none" stroke="#1e8bc3" stroke-width="1.200"/></g></svg>
<span class="t" style="left:674.5px;top:450.5px;line-height:18px;font-size:12px;color:#000;letter-spacing:-0.337px;">possible_keys</span>
<svg style="left:757px;top:451.5px" width="18" height="16" viewBox="0 0 18 16"><path d="M.8 1.800h7.600L5.600 5.500v7.500L3.600 11.500V5.500z" fill="#8cc6ef" stroke="#3f97d8" stroke-width="1"/><path d="M13 4v8" stroke="#2f86c8" stroke-width="1.300"/><path d="M10.300 5.300L13 1.800l2.700 3.500zM10.300 10.700L13 14.200l2.700-3.500z" fill="#2f86c8"/></svg>
<span class="t" style="left:654.5px;top:473.5px;line-height:18px;font-size:12px;color:#000;letter-spacing:-0.125px;">idx_usuario</span>
<svg style="left:782.8px;top:451.5px" width="18" height="17" viewBox="0 0 18 17"><text x="-.2" y="11" font-family="Liberation Sans, sans-serif" font-size="10" font-weight="bold" fill="#1e8fd0" stroke="#1e8fd0" stroke-width=".35" textLength="16.500" lengthAdjust="spacingAndGlyphs">ABC</text><g transform="translate(8.5 9.2)"><rect x=".6" y="2.800" width="6" height="3.800" fill="#fff" stroke="#1e8bc3" stroke-width="1.200"/><path d="M1.800 2.800V1.800a1.800 1.800 0 0 1 3.600 0v1" fill="none" stroke="#1e8bc3" stroke-width="1.200"/></g></svg>
<span class="t" style="left:802.5px;top:450.5px;line-height:18px;font-size:12px;color:#000;letter-spacing:-0.062px;">key</span>
<svg style="left:831px;top:451.5px" width="18" height="16" viewBox="0 0 18 16"><path d="M.8 1.800h7.600L5.600 5.500v7.500L3.600 11.500V5.500z" fill="#8cc6ef" stroke="#3f97d8" stroke-width="1"/><path d="M13 4v8" stroke="#2f86c8" stroke-width="1.300"/><path d="M10.300 5.300L13 1.800l2.700 3.500zM10.300 10.700L13 14.200l2.700-3.500z" fill="#2f86c8"/></svg>
<span class="t" style="left:782.5px;top:473.5px;line-height:18px;font-size:12px;color:#9a9a9a;letter-spacing:-0.060px;">[NULL]</span>
<svg style="left:856.8px;top:451.5px" width="18" height="17" viewBox="0 0 18 17"><text x="-.2" y="11" font-family="Liberation Sans, sans-serif" font-size="10" font-weight="bold" fill="#1e8fd0" stroke="#1e8fd0" stroke-width=".35" textLength="16.500" lengthAdjust="spacingAndGlyphs">ABC</text><g transform="translate(8.5 9.2)"><rect x=".6" y="2.800" width="6" height="3.800" fill="#fff" stroke="#1e8bc3" stroke-width="1.200"/><path d="M1.800 2.800V1.800a1.800 1.800 0 0 1 3.600 0v1" fill="none" stroke="#1e8bc3" stroke-width="1.200"/></g></svg>
<span class="t" style="left:876.5px;top:450.5px;line-height:18px;font-size:12px;color:#000;letter-spacing:-0.339px;">key_len</span>
<svg style="left:926px;top:451.5px" width="18" height="16" viewBox="0 0 18 16"><path d="M.8 1.800h7.600L5.600 5.500v7.500L3.600 11.500V5.500z" fill="#8cc6ef" stroke="#3f97d8" stroke-width="1"/><path d="M13 4v8" stroke="#2f86c8" stroke-width="1.300"/><path d="M10.300 5.300L13 1.800l2.700 3.500zM10.300 10.700L13 14.200l2.700-3.500z" fill="#2f86c8"/></svg>
<span class="t" style="left:856.5px;top:473.5px;line-height:18px;font-size:12px;color:#9a9a9a;letter-spacing:-0.060px;">[NULL]</span>
<svg style="left:951.8px;top:451.5px" width="18" height="17" viewBox="0 0 18 17"><text x="-.2" y="11" font-family="Liberation Sans, sans-serif" font-size="10" font-weight="bold" fill="#1e8fd0" stroke="#1e8fd0" stroke-width=".35" textLength="16.500" lengthAdjust="spacingAndGlyphs">ABC</text><g transform="translate(8.5 9.2)"><rect x=".6" y="2.800" width="6" height="3.800" fill="#fff" stroke="#1e8bc3" stroke-width="1.200"/><path d="M1.800 2.800V1.800a1.800 1.800 0 0 1 3.600 0v1" fill="none" stroke="#1e8bc3" stroke-width="1.200"/></g></svg>
<span class="t" style="left:971.5px;top:450.5px;line-height:18px;font-size:12px;color:#000;letter-spacing:-0.005px;">ref</span>
<svg style="left:996px;top:451.5px" width="18" height="16" viewBox="0 0 18 16"><path d="M.8 1.800h7.600L5.600 5.500v7.500L3.600 11.500V5.500z" fill="#8cc6ef" stroke="#3f97d8" stroke-width="1"/><path d="M13 4v8" stroke="#2f86c8" stroke-width="1.300"/><path d="M10.300 5.300L13 1.800l2.700 3.500zM10.300 10.700L13 14.200l2.700-3.500z" fill="#2f86c8"/></svg>
<span class="t" style="left:951.5px;top:473.5px;line-height:18px;font-size:12px;color:#9a9a9a;letter-spacing:-0.060px;">[NULL]</span>
<svg style="left:1021.8px;top:451.5px" width="18" height="17" viewBox="0 0 18 17"><text x="-.2" y="11" font-family="Liberation Sans, sans-serif" font-size="10" font-weight="bold" fill="#1e8fd0" stroke="#1e8fd0" stroke-width=".35" textLength="16.500" lengthAdjust="spacingAndGlyphs">ABC</text><g transform="translate(8.5 9.2)"><rect x=".6" y="2.800" width="6" height="3.800" fill="#fff" stroke="#1e8bc3" stroke-width="1.200"/><path d="M1.800 2.800V1.800a1.800 1.800 0 0 1 3.600 0v1" fill="none" stroke="#1e8bc3" stroke-width="1.200"/></g></svg>
<span class="t" style="left:1041.5px;top:450.5px;line-height:18px;font-size:12px;color:#000;letter-spacing:-0.086px;">rows</span>
<svg style="left:1077px;top:451.5px" width="18" height="16" viewBox="0 0 18 16"><path d="M.8 1.800h7.600L5.600 5.500v7.500L3.600 11.500V5.500z" fill="#8cc6ef" stroke="#3f97d8" stroke-width="1"/><path d="M13 4v8" stroke="#2f86c8" stroke-width="1.300"/><path d="M10.300 5.300L13 1.800l2.700 3.500zM10.300 10.700L13 14.200l2.700-3.500z" fill="#2f86c8"/></svg>
<span class="t" style="left:1021.5px;top:473.5px;line-height:18px;font-size:12px;color:#000;letter-spacing:-0.4px;transform:scaleX(0.8758);transform-origin:0 50%;">12</span>
<svg style="left:1102.8px;top:451.5px" width="18" height="17" viewBox="0 0 18 17"><text x="-.2" y="11" font-family="Liberation Sans, sans-serif" font-size="10" font-weight="bold" fill="#1e8fd0" stroke="#1e8fd0" stroke-width=".35" textLength="16.500" lengthAdjust="spacingAndGlyphs">ABC</text><g transform="translate(8.5 9.2)"><rect x=".6" y="2.800" width="6" height="3.800" fill="#fff" stroke="#1e8bc3" stroke-width="1.200"/><path d="M1.800 2.800V1.800a1.800 1.800 0 0 1 3.600 0v1" fill="none" stroke="#1e8bc3" stroke-width="1.200"/></g></svg>
<span class="t" style="left:1122.5px;top:450.5px;line-height:18px;font-size:12px;color:#000;letter-spacing:-0.203px;">Extra</span>
<svg style="left:1159px;top:451.5px" width="18" height="16" viewBox="0 0 18 16"><path d="M.8 1.800h7.600L5.600 5.500v7.500L3.600 11.500V5.500z" fill="#8cc6ef" stroke="#3f97d8" stroke-width="1"/><path d="M13 4v8" stroke="#2f86c8" stroke-width="1.300"/><path d="M10.300 5.300L13 1.800l2.700 3.500zM10.300 10.700L13 14.200l2.700-3.500z" fill="#2f86c8"/></svg>
<span class="t" style="left:1102.5px;top:473.5px;line-height:18px;font-size:12px;color:#000;letter-spacing:-0.155px;">Using where</span>
<div style="left:255px;top:686px;width:1016px;height:22px;background:#f0f0f0;"></div>
<div style="left:255px;top:708px;width:1016px;height:1px;background:#dedede;"></div>
<svg style="left:285.5px;top:689.5px" width="15" height="15" viewBox="0 0 15 15"><circle cx="7.500" cy="7.500" r="6.600" fill="none" stroke="#9c9c9c" stroke-width="1.300"/><path d="M4 7.500l2.500 2.500 4.500-5" fill="none" stroke="#9c9c9c" stroke-width="1.300"/></svg>
<span class="t" style="left:305.6px;top:687.5px;line-height:18px;font-size:12px;color:#a0a0a0;letter-spacing:-0.4px;transform:scaleX(0.8735);transform-origin:0 50%;">Save</span>
<svg style="left:342px;top:691px" width="12" height="12" viewBox="0 0 12 12"><rect x=".5" y=".5" width="11" height="11" fill="none" stroke="#a0a0a0"/><path d="M3 3l6 6M9 3l-6 6" stroke="#a0a0a0" stroke-width="1"/></svg>
<span class="t" style="left:360.8px;top:687.5px;line-height:18px;font-size:12px;color:#a0a0a0;letter-spacing:-0.460px;">Cancel</span>
<svg style="left:408px;top:690px" width="14" height="14" viewBox="0 0 14 14"><path d="M2.500 1h10v2.500h-2V11c0 1.500-1 2.500-2.500 2.500H1c1 0 1.500-1 1.500-2z" fill="#a0a0a0"/><circle cx="7" cy="9" r="2" fill="none" stroke="#f0f0f0" stroke-width="1"/><path d="M8.500 10.500l2 2" stroke="#f0f0f0"/></svg>
<span class="t" style="left:427.6px;top:687.5px;line-height:18px;font-size:12px;color:#a0a0a0;letter-spacing:-0.281px;">Script</span>
<div style="left:467px;top:689px;width:1px;height:17px;background:#8a8a8a;"></div>
<svg style="left:477px;top:690px" width="17" height="14" viewBox="0 0 17 14"><path d="M0 2h15M0 6.500h15M0 11h7" stroke="#1e8bc3" stroke-width="1.600"/><path d="M9 13.500l1-3 5-4.500 1.800 1.800-5 4.700z" fill="#1e8bc3"/></svg>
<svg style="left:501.5px;top:690px" width="16" height="14" viewBox="0 0 16 14"><path d="M0 2h15M0 6.500h7M0 11h7" stroke="#8c8c8c" stroke-width="1.700"/><path d="M12 5.500v8M8 9.500h8" stroke="#8c8c8c" stroke-width="1.800"/></svg>
<svg style="left:525.5px;top:690px" width="15" height="14" viewBox="0 0 15 14"><path d="M0 2h14.500" stroke="#8c8c8c" stroke-width="1.700"/><path d="M1 6v1.500M1 10.500v1.500" stroke="#8c8c8c" stroke-width="1.700"/><path d="M5.500 5C4 6.500 4 11.500 5.500 13M13 5c1.500 1.500 1.500 6.500 0 8M9.300 6.500v5M6.800 9h5" fill="none" stroke="#8c8c8c" stroke-width="1.100"/></svg>
<svg style="left:549px;top:690px" width="16" height="14" viewBox="0 0 16 14"><path d="M0 2h15M0 6.500h7M0 11h7M9.500 9.500h6.500" stroke="#8c8c8c" stroke-width="1.700"/></svg>
<svg style="left:573px;top:689px" width="2" height="15.2" viewBox="0 0 2 15.200000000000001"><rect x="0" y="0" width="2" height="2" fill="#bdbdbd"/><rect x="0" y="4.4" width="2" height="2" fill="#bdbdbd"/><rect x="0" y="8.8" width="2" height="2" fill="#bdbdbd"/><rect x="0" y="13.2" width="2" height="2" fill="#bdbdbd"/></svg>
<svg style="left:581px;top:690px" width="13" height="13" viewBox="0 0 13 13"><path d="M1 0v13M12 .5L5.500 6.500l6.500 6" fill="none" stroke="#858585" stroke-width="1.900"/></svg>
<svg style="left:606px;top:690px" width="9" height="13" viewBox="0 0 9 13"><path d="M8 .5L1.500 6.500l6.500 6" fill="none" stroke="#858585" stroke-width="1.900"/></svg>
<svg style="left:631px;top:690px" width="9" height="13" viewBox="0 0 9 13"><path d="M1 .5L7.500 6.500l-6.500 6" fill="none" stroke="#858585" stroke-width="1.900"/></svg>
<svg style="left:651px;top:690px" width="13" height="13" viewBox="0 0 13 13"><path d="M12 0v13M1 .5L7.500 6.500l-6.500 6" fill="none" stroke="#858585" stroke-width="1.900"/></svg>
<div style="left:671px;top:689px;width:1px;height:17px;background:#8a8a8a;"></div>
<svg style="left:681px;top:690px" width="15" height="14" viewBox="0 0 15 14"><path d="M.5 4v7h5M3.500 8.500l2.500 2.500-2.500 2.500" fill="none" stroke="#a0a0a0" stroke-width="1"/><path d="M8.500 .5h3.500l2 2v5H8.500z" fill="none" stroke="#a0a0a0" stroke-width="1"/></svg>
<svg style="left:704px;top:690px" width="15" height="14" viewBox="0 0 15 14"><path d="M3.500 .5h-3v3M11.500 .5h3v3M.5 10.500v3h3M14.500 10.500v3h-3" fill="none" stroke="#a0a0a0" stroke-width="1"/><path d="M5 3.500h3.500l1.500 1.500v5.500H5z" fill="none" stroke="#a0a0a0" stroke-width="1"/></svg>
<svg style="left:728px;top:689px" width="2" height="15.2" viewBox="0 0 2 15.200000000000001"><rect x="0" y="0" width="2" height="2" fill="#bdbdbd"/><rect x="0" y="4.4" width="2" height="2" fill="#bdbdbd"/><rect x="0" y="8.8" width="2" height="2" fill="#bdbdbd"/><rect x="0" y="13.2" width="2" height="2" fill="#bdbdbd"/></svg>
<svg style="left:738px;top:689px" width="14" height="15" viewBox="0 0 14 15"><path d="M7 11V1.500M3.500 5L7 1.500 10.500 5" fill="none" stroke="#1e8bc3" stroke-width="1.600"/><path d="M1 10v4h12v-4" fill="none" stroke="#1e8bc3" stroke-width="1.500"/></svg>
<svg style="left:761px;top:689px" width="2" height="15.2" viewBox="0 0 2 15.200000000000001"><rect x="0" y="0" width="2" height="2" fill="#bdbdbd"/><rect x="0" y="4.4" width="2" height="2" fill="#bdbdbd"/><rect x="0" y="8.8" width="2" height="2" fill="#bdbdbd"/><rect x="0" y="13.2" width="2" height="2" fill="#bdbdbd"/></svg>
<svg style="left:768px;top:689px" width="15.5" height="15.5" viewBox="0 0 16 16"><g fill="#1e8bc3"><rect x="6.300" y="0" width="3.400" height="16" rx=".8" transform="rotate(0 8 8)"/><rect x="6.300" y="0" width="3.400" height="16" rx=".8" transform="rotate(45 8 8)"/><rect x="6.300" y="0" width="3.400" height="16" rx=".8" transform="rotate(90 8 8)"/><rect x="6.300" y="0" width="3.400" height="16" rx=".8" transform="rotate(135 8 8)"/><circle cx="8" cy="8" r="5.800"/></g><circle cx="8" cy="8" r="2.600" fill="#f0f0f0"/></svg>
<div style="left:792px;top:686px;width:56px;height:21px;background:#fff;border:1px solid #7a7a7a;"></div>
<span class="t" style="left:797px;top:687.5px;line-height:18px;font-size:12px;color:#000;letter-spacing:-0.4px;transform:scaleX(0.9559);transform-origin:0 50%;">200</span>
<svg style="left:854px;top:689px" width="17" height="15" viewBox="0 0 17 15"><path d="M2 7.500V6a3 3 0 0 1 3-3h8M10.500 .3L13.500 3l-3 2.700M15 7.500V9a3 3 0 0 1-3 3H4M6.500 9.300L3.500 12l3 2.700" fill="none" stroke="#27a344" stroke-width="1.800"/></svg>
<span class="t" style="left:878.5px;top:687.5px;line-height:18px;font-size:12px;color:#000;letter-spacing:-1.688px;">1</span>
<svg style="left:892px;top:689px" width="2" height="15.2" viewBox="0 0 2 15.200000000000001"><rect x="0" y="0" width="2" height="2" fill="#d9a0a0"/><rect x="0" y="4.4" width="2" height="2" fill="#d9a0a0"/><rect x="0" y="8.8" width="2" height="2" fill="#d9a0a0"/><rect x="0" y="13.2" width="2" height="2" fill="#d9a0a0"/></svg>
<span class="t" style="left:901px;top:687.5px;line-height:18px;font-size:12px;color:#000;letter-spacing:-0.551px;">Rows: 1</span>
<svg style="left:981px;top:689px" width="16" height="15" viewBox="0 0 16 15"><rect x="5" y="3.500" width="10" height="7.500" fill="#4db3ea" stroke="#1e8bc3" stroke-width="1"/><path d="M3 .5h4M5 .5v14M3 14.500h4" stroke="#1e8bc3" stroke-width="1" fill="none"/><path d="M.5 4v6.500" stroke="#1e8bc3" stroke-width="1" stroke-dasharray="2 1.500"/></svg>
<span class="t" style="left:1004px;top:687.5px;line-height:18px;font-size:12px;color:#000;letter-spacing:-0.089px;">1 row(s) fetched - 18ms</span>
<div style="left:254px;top:393px;width:1px;height:316px;background:#dedede;"></div>
<div style="left:1270px;top:393px;width:1px;height:316px;background:#dedede;"></div>
<svg style="left:750px;top:390.5px" width="13" height="5" viewBox="0 0 13 5"><path d="M0 4.500l2.800-4 2.800 4zM7 .5h5.600l-2.800 4z" fill="#55557a"/></svg>
<div style="left:1246px;top:446px;width:24px;height:240px;background:#f0f0f0;"></div>
<svg style="left:1250.5px;top:454.8px" width="14.5" height="15.4" viewBox="0 0 16 17"><path d="M.7 .7h14.600v11H.7z" fill="#fff" stroke="#1e8bc3" stroke-width="1.400"/><path d="M7.500 .7h7.800v8.300H7.500z" fill="#4db3ea"/><path d="M.7 .7h14.600v2.400H.7z" fill="#1e8bc3"/><circle cx="3.800" cy="12.200" r="4.600" fill="#f0f0f0"/><rect x="2.700" y="8.300" width="2.200" height="7.800" rx=".5" fill="#1e8bc3" transform="rotate(0 3.800 12.200)"/><rect x="2.700" y="8.300" width="2.200" height="7.800" rx=".5" fill="#1e8bc3" transform="rotate(45 3.800 12.200)"/><rect x="2.700" y="8.300" width="2.200" height="7.800" rx=".5" fill="#1e8bc3" transform="rotate(90 3.800 12.200)"/><rect x="2.700" y="8.300" width="2.200" height="7.800" rx=".5" fill="#1e8bc3" transform="rotate(135 3.800 12.200)"/><circle cx="3.800" cy="12.200" r="2.700" fill="#1e8bc3"/><circle cx="3.800" cy="12.200" r="1.100" fill="#f0f0f0"/></svg>
<span class="t r" style="left:1258px;top:488px;line-height:16px;font-size:12px;color:#000;transform:translate(-50%,-50%) rotate(90deg);letter-spacing:-0.851px;margin-left:-0.425px;">Panels</span>
<svg style="left:1250px;top:522px" width="15" height="14" viewBox="0 0 15 14"><g fill="none" stroke-width="1.300"><circle cx="3.500" cy="3.500" r="2.300" stroke="#1e8bc3"/><circle cx="11" cy="3.500" r="2.300" stroke="#f08a1c"/><circle cx="3.500" cy="10.500" r="2.300" stroke="#1e8bc3"/><circle cx="11" cy="10.500" r="2.300" stroke="#f08a1c"/></g><path d="M2.500 2.500l2 2M4.500 2.500l-2 2M2.500 10.500h2" stroke="#1e8bc3" stroke-width=".8"/><path d="M10 10.500h2" stroke="#f08a1c" stroke-width="1"/></svg>
<svg style="left:1250px;top:544px" width="16" height="16" viewBox="0 0 16 16"><circle cx="8" cy="8" r="7" fill="none" stroke="#1e8bc3" stroke-width="1.300"/><g fill="#1e8bc3"><circle cx="5.500" cy="6" r="1.100"/><circle cx="10.500" cy="6" r="1.100"/><circle cx="5.500" cy="10" r="1.100"/><circle cx="10.500" cy="10" r="1.100"/></g></svg>
<svg style="left:1250px;top:567px" width="15" height="15" viewBox="0 0 15 15"><rect x=".5" y=".5" width="14" height="14" fill="#fff" stroke="#1e8bc3"/><rect x="1.0" y="1.0" width="2.600" height="2.600" fill="#1e8bc3"/><rect x="1.0" y="6.2" width="2.600" height="2.600" fill="#1e8bc3"/><rect x="1.0" y="11.4" width="2.600" height="2.600" fill="#1e8bc3"/><rect x="3.6" y="3.6" width="2.600" height="2.600" fill="#1e8bc3"/><rect x="3.6" y="8.8" width="2.600" height="2.600" fill="#1e8bc3"/><rect x="6.2" y="1.0" width="2.600" height="2.600" fill="#1e8bc3"/><rect x="6.2" y="6.2" width="2.600" height="2.600" fill="#1e8bc3"/><rect x="6.2" y="11.4" width="2.600" height="2.600" fill="#1e8bc3"/><rect x="8.8" y="3.6" width="2.600" height="2.600" fill="#1e8bc3"/><rect x="8.8" y="8.8" width="2.600" height="2.600" fill="#1e8bc3"/><rect x="11.4" y="1.0" width="2.600" height="2.600" fill="#1e8bc3"/><rect x="11.4" y="6.2" width="2.600" height="2.600" fill="#1e8bc3"/><rect x="11.4" y="11.4" width="2.600" height="2.600" fill="#1e8bc3"/></svg>
<svg style="left:1250px;top:587px" width="16" height="18" viewBox="0 0 16 18"><rect x=".7" y="6.700" width="14" height="10" fill="#fff" stroke="#1e8bc3" stroke-width="1.300"/><path d="M.7 10h14M.7 13.300h14M5.300 6.700v10M10 6.700v10" stroke="#1e8bc3" stroke-width="1.100"/><path d="M7.700 0v8M5 5l2.700 3 2.700-3" fill="none" stroke="#f08a1c" stroke-width="1.600"/></svg>
<svg style="left:1250px;top:611px" width="16" height="15" viewBox="0 0 16 15"><path d="M.7 .7h14.600v8H8.500v5H.7z" fill="none" stroke="#1e8bc3" stroke-width="1.400"/><path d="M.7 .7h14.600v3.600H.7z" fill="#1e8bc3"/><path d="M10 11.500h5.500M10 9.500v4M15.500 9.500v4" stroke="#1e8bc3" stroke-width="1"/></svg>
<svg style="left:1250px;top:689px" width="16" height="16" viewBox="0 0 16 16"><rect x=".5" y="1.500" width="4.500" height="13" rx="1" fill="#1e8bc3"/><path d="M7.500 5.500A4.500 4.500 0 0 1 14.500 9v1.500M12.500 8.500l2 2.500 1.500-2.500M7 12.500h6v2H7z" fill="none" stroke="#1e8bc3" stroke-width="1.500"/></svg>
<div style="left:0px;top:709px;width:1305px;height:26px;background:#f0f0f0;"></div>
<div style="left:485px;top:709px;width:1px;height:22px;background:#a0a0a0;"></div>
<div style="left:518px;top:709px;width:1px;height:22px;background:#a0a0a0;"></div>
<div style="left:545px;top:709px;width:1px;height:22px;background:#a0a0a0;"></div>
<div style="left:679px;top:709px;width:1px;height:22px;background:#a0a0a0;"></div>
<div style="left:807px;top:709px;width:1px;height:22px;background:#a0a0a0;"></div>
<div style="left:935px;top:709px;width:1px;height:22px;background:#a0a0a0;"></div>
<span class="t" style="left:493.2px;top:710.5px;line-height:18px;font-size:12px;color:#000;letter-spacing:-0.4px;transform:scaleX(0.8630);transform-origin:0 50%;">BRT</span>
<span class="t" style="left:526.3px;top:710.5px;line-height:18px;font-size:12px;color:#000;letter-spacing:-0.430px;">en</span>
<span class="t" style="left:553px;top:710.5px;line-height:18px;font-size:12px;color:#000;letter-spacing:0.088px;">Writable</span>
<span class="t" style="left:687px;top:710.5px;line-height:18px;font-size:12px;color:#000;letter-spacing:-0.238px;">Smart Insert</span>
<span class="t" style="left:815.3px;top:710.5px;line-height:18px;font-size:12px;color:#000;letter-spacing:-0.379px;">158 : 1 [51]</span>
<span class="t" style="left:943.4px;top:710.5px;line-height:18px;font-size:12px;color:#000;letter-spacing:-0.575px;">Sel: 51 | 2</span>
<svg style="left:1020px;top:713px" width="2" height="15.2" viewBox="0 0 2 15.200000000000001"><rect x="0" y="0" width="2" height="2" fill="#bdbdbd"/><rect x="0" y="4.4" width="2" height="2" fill="#bdbdbd"/><rect x="0" y="8.8" width="2" height="2" fill="#bdbdbd"/><rect x="0" y="13.2" width="2" height="2" fill="#bdbdbd"/></svg>
<div style="left:1271px;top:76px;width:34px;height:633px;background:#f0f0f0;"></div>
<div style="left:1272px;top:76px;width:32px;height:57px;background:#f4f4f4;border:1px solid #dedede;border-radius:0 0 7px 7px;border-top:none;"></div>
<svg style="left:1279px;top:82px" width="18" height="2" viewBox="0 0 18 2"><rect x="0.0" y="0" width="2.500" height="1.500" fill="#9a9a9a"/><rect x="4.5" y="0" width="2.500" height="1.500" fill="#9a9a9a"/><rect x="9.0" y="0" width="2.500" height="1.500" fill="#9a9a9a"/><rect x="13.5" y="0" width="2.500" height="1.500" fill="#9a9a9a"/></svg>
<svg style="left:1283px;top:92px" width="9" height="9" viewBox="0 0 9 9"><g fill="none" stroke="#444" stroke-width="1.200"><path d="M3 3V.7h5.300v4.600H6"/><rect x=".7" y="3.500" width="5.300" height="4.800"/></g></svg>
<svg style="left:1279px;top:110px" width="17" height="16" viewBox="0 0 17 16"><path d="M.5 10.500C3 10.500 5 9 7 7.500 9 6 11 4.500 12.500 2.500 13.300 1.300 14.800 .6 16.300 .8 15.800 1.600 15.900 2.600 16 3.600 16.100 5.400 15 7.600 13.200 9 12.400 9.700 11.600 10.600 11.400 12L9.600 12C9.900 10.900 9.600 10.300 8.800 10.400 6.500 10.800 3.500 11.800 .5 11.300Z" fill="#d5dade" stroke="#a3adb6" stroke-width=".8" stroke-linejoin="round"/></svg>
<svg style="left:0;top:0" width="1305" height="735" viewBox="0 0 1305 735"><g fill="none" stroke="#1414d2" stroke-width="2.100" stroke-linecap="round" stroke-linejoin="round"><path d="M611.1 451.7C609.9 451.3 607.0 449.7 604.1 449.1C601.2 448.5 597.0 448.1 593.5 448.2C590.0 448.3 586.1 448.8 582.9 450.0C579.7 451.2 576.6 452.8 574.1 455.3C571.6 457.8 569.4 461.3 567.9 465.0C566.4 468.7 565.4 473.5 565.3 477.3C565.1 481.1 565.7 484.8 567.0 487.9C568.3 491.0 570.6 493.3 573.2 495.8C575.9 498.3 578.9 500.7 582.9 502.9C586.9 505.1 592.3 508.6 597.0 509.0C601.7 509.4 607.1 507.1 611.1 505.5C615.1 503.9 618.3 501.9 620.8 499.3C623.3 496.7 625.1 493.3 626.1 489.6C627.1 485.9 627.3 481.7 627.0 477.3C626.7 472.9 625.6 467.3 624.3 463.2C623.0 459.1 620.9 455.4 619.0 452.6C617.1 449.8 613.9 447.5 612.9 446.5"/><path d="M656.0 444.7C658.2 444.2 664.1 442.7 669.3 442.0C674.4 441.3 680.1 440.7 686.9 440.3C693.6 439.9 702.2 439.6 709.8 439.9C717.4 440.2 725.7 441.1 732.7 442.0C739.8 442.9 746.5 444.1 752.1 445.6C757.7 447.1 762.5 448.8 766.2 450.9C769.9 452.9 772.2 455.1 774.1 457.9C776.0 460.7 777.4 464.1 777.7 467.6C778.0 471.1 777.2 475.1 775.9 479.1C774.6 483.1 772.5 487.6 769.7 491.4C766.9 495.2 763.6 498.8 759.2 502.0C754.8 505.2 748.9 508.4 743.3 510.8C737.7 513.1 731.9 514.9 725.7 516.1C719.5 517.3 712.8 517.8 706.3 517.8C699.8 517.8 692.5 517.3 686.9 516.1C681.3 514.9 676.9 513.1 672.8 510.8C668.7 508.4 665.4 505.5 662.2 502.0C659.0 498.5 655.9 494.0 653.4 489.6C650.9 485.2 648.4 480.2 647.2 475.5C646.0 470.8 646.0 465.5 646.4 461.4C646.8 457.3 648.3 453.7 649.9 450.9C651.5 448.1 654.6 445.9 656.0 444.7C657.4 443.5 657.7 443.7 658.0 443.5"/><path d="M1052.1 441.9C1050.6 441.8 1046.5 440.9 1042.9 441.1C1039.3 441.4 1034.5 442.1 1030.7 443.4C1026.9 444.7 1022.9 446.4 1019.9 448.8C1016.9 451.2 1014.6 454.4 1013.0 458.0C1011.4 461.6 1010.5 466.1 1010.0 470.2C1009.5 474.3 1009.5 478.7 1010.0 482.5C1010.5 486.3 1011.7 490.3 1013.0 493.2C1014.3 496.1 1016.3 498.6 1017.6 500.1C1018.9 501.6 1020.2 502.0 1020.7 502.4"/><path d="M1016.9 497.8C1018.7 497.8 1023.8 497.9 1027.6 497.8C1031.4 497.7 1036.0 497.7 1039.8 497.1C1043.6 496.5 1047.3 495.5 1050.6 494.0C1053.9 492.5 1057.2 490.3 1059.8 487.9C1062.3 485.5 1064.4 482.6 1065.9 479.4C1067.4 476.2 1068.6 472.3 1069.0 468.7C1069.4 465.1 1069.0 461.2 1068.2 458.0C1067.4 454.8 1066.1 451.9 1064.4 449.6C1062.7 447.3 1060.2 445.5 1058.2 444.2C1056.2 442.9 1053.1 442.3 1052.1 441.9"/><path d="M1106.5 499.7C1110.5 499.7 1123.5 499.8 1130.3 499.7C1137.1 499.6 1143.0 499.8 1147.1 499.4C1151.2 499.0 1151.3 497.4 1154.8 497.1C1158.2 496.8 1165.6 497.3 1167.8 497.4"/><path d="M1083.5 531.2C1084.9 530.9 1089.1 530.4 1092.0 529.3C1094.9 528.2 1098.0 526.5 1101.1 524.7C1104.1 522.9 1107.7 520.5 1110.3 518.5C1112.9 516.5 1114.7 514.3 1116.5 512.4C1118.3 510.5 1120.3 507.9 1121.1 507.0"/><path d="M1121.1 507L1121.8 510.1 1117.2 522.4 1113.4 522.4 1105.7 517.8 1116.5 510.1Z"/></g></svg>
</body></html>
